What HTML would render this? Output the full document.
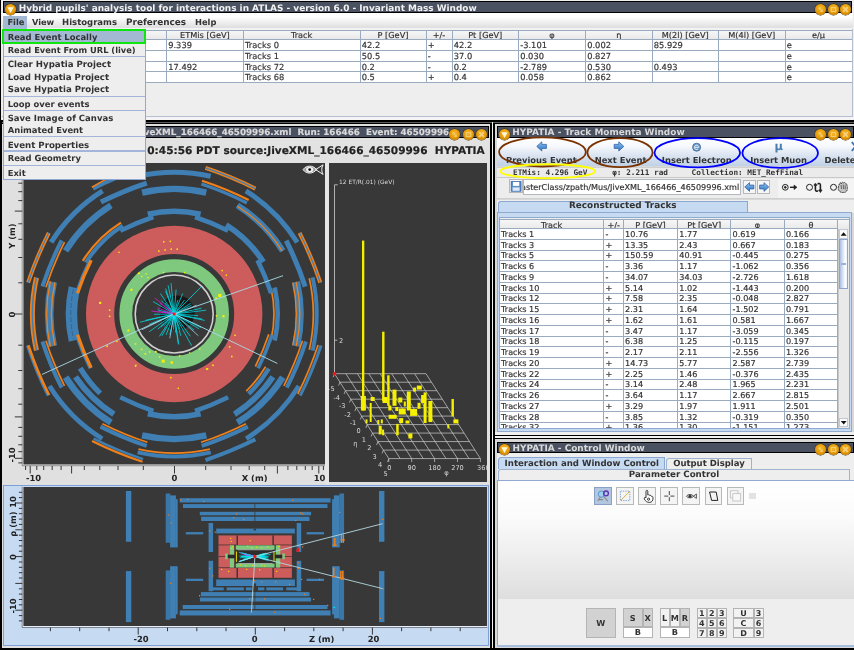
<!DOCTYPE html>
<html><head><meta charset="utf-8"><title>HYPATIA</title>
<style>
html,body{margin:0;padding:0;}
body{text-rendering:geometricPrecision;width:854px;height:650px;position:relative;overflow:hidden;background:#eeeeee;font-family:'DejaVu Sans','Liberation Sans',sans-serif;}
div{position:absolute;box-sizing:border-box;}
.t{margin:0;padding:0;-webkit-text-stroke:0.18px currentColor;}
svg{position:absolute;left:0;top:0;overflow:hidden;}
</style></head><body>
<div id="screen" style="left:0;top:0;width:854px;height:650px;will-change:transform;">
<!-- main window -->
<div style="left:0.00px;top:0.00px;width:1.30px;height:650.00px;background:#000;"></div>
<div style="left:0.00px;top:121.00px;width:1.90px;height:529.00px;background:#000;"></div>
<div style="left:2.00px;top:13.00px;width:850.80px;height:15.20px;background:linear-gradient(#ffffff,#ffffff 25%,#f2f2f2 55%,#dedede);"></div>
<div style="left:2.00px;top:28.20px;width:850.80px;height:1.80px;background:#f3f3f3;"></div>
<div style="left:2.90px;top:16.20px;width:23.80px;height:12.60px;background:#a3b8d2;"></div>
<div class="t" style="top:17px;font-size:8.3px;color:#333;white-space:pre;font-weight:bold;-webkit-text-stroke:0;left:7.40px;">File</div>
<div class="t" style="top:17px;font-size:8.25px;color:#333;white-space:pre;font-weight:bold;-webkit-text-stroke:0;left:31.90px;">View</div>
<div class="t" style="top:18px;font-size:8.5px;color:#333;white-space:pre;font-weight:bold;-webkit-text-stroke:0;left:62.10px;">Histograms</div>
<div class="t" style="top:18px;font-size:8.88px;color:#333;white-space:pre;font-weight:bold;-webkit-text-stroke:0;left:126.00px;">Preferences</div>
<div class="t" style="top:17px;font-size:8.3px;color:#333;white-space:pre;font-weight:bold;-webkit-text-stroke:0;left:195.00px;">Help</div>
<div style="left:3.00px;top:1.20px;width:848.80px;height:11.90px;background:#4a5161;border:1.2px solid #000;"></div><div class="t" style="top:4px;font-size:8.93px;color:#f2f2f2;white-space:pre;font-weight:bold;-webkit-text-stroke:0;left:18.70px;">Hybrid pupils' analysis tool for interactions in ATLAS - version 6.0 - Invariant Mass Window</div>
<div style="left:3.00px;top:30.00px;width:849.70px;height:9.40px;background:linear-gradient(#f6f6f6,#e9e9e9);border-top:1px solid #9aabc0;"></div>
<div style="left:3.00px;top:39.40px;width:849.70px;height:43.20px;background:#fff;"></div>
<div style="left:3.00px;top:38.90px;width:849.70px;height:1.00px;background:#9aabc0;"></div>
<div style="left:3.00px;top:50.00px;width:849.70px;height:1.00px;background:#9aabc0;"></div>
<div style="left:3.00px;top:60.70px;width:849.70px;height:1.00px;background:#9aabc0;"></div>
<div style="left:3.00px;top:71.40px;width:849.70px;height:1.00px;background:#9aabc0;"></div>
<div style="left:3.00px;top:82.10px;width:849.70px;height:1.00px;background:#9aabc0;"></div>
<div style="left:2.50px;top:30.00px;width:1.00px;height:53.00px;background:#9aabc0;"></div>
<div style="left:99.50px;top:30.00px;width:1.00px;height:53.00px;background:#9aabc0;"></div>
<div style="left:166.00px;top:30.00px;width:1.00px;height:53.00px;background:#9aabc0;"></div>
<div style="left:242.80px;top:30.00px;width:1.00px;height:53.00px;background:#9aabc0;"></div>
<div style="left:359.50px;top:30.00px;width:1.00px;height:53.00px;background:#9aabc0;"></div>
<div style="left:425.50px;top:30.00px;width:1.00px;height:53.00px;background:#9aabc0;"></div>
<div style="left:451.50px;top:30.00px;width:1.00px;height:53.00px;background:#9aabc0;"></div>
<div style="left:518.00px;top:30.00px;width:1.00px;height:53.00px;background:#9aabc0;"></div>
<div style="left:585.00px;top:30.00px;width:1.00px;height:53.00px;background:#9aabc0;"></div>
<div style="left:651.50px;top:30.00px;width:1.00px;height:53.00px;background:#9aabc0;"></div>
<div style="left:718.00px;top:30.00px;width:1.00px;height:53.00px;background:#9aabc0;"></div>
<div style="left:784.50px;top:30.00px;width:1.00px;height:53.00px;background:#9aabc0;"></div>
<div style="left:851.70px;top:30.00px;width:1.00px;height:53.00px;background:#9aabc0;"></div>
<div style="left:3.00px;top:30.00px;width:849.70px;height:9.40px;overflow:hidden;"><div class="t" style="top:0px;font-size:8.2px;color:#333;white-space:pre;left:1.90px;width:400px;text-align:center;">ETMis [GeV]</div><div class="t" style="top:0px;font-size:8.2px;color:#333;white-space:pre;left:98.65px;width:400px;text-align:center;">Track</div><div class="t" style="top:0px;font-size:8.2px;color:#333;white-space:pre;left:190.00px;width:400px;text-align:center;">P [GeV]</div><div class="t" style="top:0px;font-size:8.2px;color:#333;white-space:pre;left:236.00px;width:400px;text-align:center;">+/-</div><div class="t" style="top:0px;font-size:8.2px;color:#333;white-space:pre;left:282.25px;width:400px;text-align:center;">Pt [GeV]</div><div class="t" style="top:0px;font-size:8.2px;color:#333;white-space:pre;left:349.00px;width:400px;text-align:center;">φ</div><div class="t" style="top:0px;font-size:8.2px;color:#333;white-space:pre;left:415.75px;width:400px;text-align:center;">η</div><div class="t" style="top:0px;font-size:8.2px;color:#333;white-space:pre;left:482.25px;width:400px;text-align:center;">M(2l) [GeV]</div><div class="t" style="top:0px;font-size:8.2px;color:#333;white-space:pre;left:548.75px;width:400px;text-align:center;">M(4l) [GeV]</div><div class="t" style="top:0px;font-size:8.2px;color:#333;white-space:pre;left:615.60px;width:400px;text-align:center;">e/μ</div></div>
<div class="t" style="top:40px;font-size:8.3px;color:#333;white-space:pre;left:168.20px;">9.339</div>
<div class="t" style="top:40px;font-size:8.3px;color:#333;white-space:pre;left:245.00px;">Tracks 0</div>
<div class="t" style="top:40px;font-size:8.3px;color:#333;white-space:pre;left:361.70px;">42.2</div>
<div class="t" style="top:40px;font-size:8.3px;color:#333;white-space:pre;left:427.70px;">+</div>
<div class="t" style="top:40px;font-size:8.3px;color:#333;white-space:pre;left:453.70px;">42.2</div>
<div class="t" style="top:40px;font-size:8.3px;color:#333;white-space:pre;left:520.20px;">-3.101</div>
<div class="t" style="top:40px;font-size:8.3px;color:#333;white-space:pre;left:587.20px;">0.002</div>
<div class="t" style="top:40px;font-size:8.3px;color:#333;white-space:pre;left:653.70px;">85.929</div>
<div class="t" style="top:40px;font-size:8.3px;color:#333;white-space:pre;left:786.70px;">e</div>
<div class="t" style="top:51px;font-size:8.3px;color:#333;white-space:pre;left:245.00px;">Tracks 1</div>
<div class="t" style="top:51px;font-size:8.3px;color:#333;white-space:pre;left:361.70px;">50.5</div>
<div class="t" style="top:51px;font-size:8.3px;color:#333;white-space:pre;left:427.70px;">-</div>
<div class="t" style="top:51px;font-size:8.3px;color:#333;white-space:pre;left:453.70px;">37.0</div>
<div class="t" style="top:51px;font-size:8.3px;color:#333;white-space:pre;left:520.20px;">0.030</div>
<div class="t" style="top:51px;font-size:8.3px;color:#333;white-space:pre;left:587.20px;">0.827</div>
<div class="t" style="top:51px;font-size:8.3px;color:#333;white-space:pre;left:786.70px;">e</div>
<div class="t" style="top:62px;font-size:8.3px;color:#333;white-space:pre;left:168.20px;">17.492</div>
<div class="t" style="top:62px;font-size:8.3px;color:#333;white-space:pre;left:245.00px;">Tracks 72</div>
<div class="t" style="top:62px;font-size:8.3px;color:#333;white-space:pre;left:361.70px;">0.2</div>
<div class="t" style="top:62px;font-size:8.3px;color:#333;white-space:pre;left:427.70px;">-</div>
<div class="t" style="top:62px;font-size:8.3px;color:#333;white-space:pre;left:453.70px;">0.2</div>
<div class="t" style="top:62px;font-size:8.3px;color:#333;white-space:pre;left:520.20px;">-2.789</div>
<div class="t" style="top:62px;font-size:8.3px;color:#333;white-space:pre;left:587.20px;">0.530</div>
<div class="t" style="top:62px;font-size:8.3px;color:#333;white-space:pre;left:653.70px;">0.493</div>
<div class="t" style="top:62px;font-size:8.3px;color:#333;white-space:pre;left:786.70px;">e</div>
<div class="t" style="top:72px;font-size:8.3px;color:#333;white-space:pre;left:245.00px;">Tracks 68</div>
<div class="t" style="top:72px;font-size:8.3px;color:#333;white-space:pre;left:361.70px;">0.5</div>
<div class="t" style="top:72px;font-size:8.3px;color:#333;white-space:pre;left:427.70px;">+</div>
<div class="t" style="top:72px;font-size:8.3px;color:#333;white-space:pre;left:453.70px;">0.4</div>
<div class="t" style="top:72px;font-size:8.3px;color:#333;white-space:pre;left:520.20px;">0.058</div>
<div class="t" style="top:72px;font-size:8.3px;color:#333;white-space:pre;left:587.20px;">0.862</div>
<div class="t" style="top:72px;font-size:8.3px;color:#333;white-space:pre;left:786.70px;">e</div>
<div style="left:2.00px;top:115.90px;width:851.00px;height:1.40px;background:#b4c0d2;"></div>
<div style="left:852.00px;top:29.00px;width:1.10px;height:88.00px;background:#b4c0d2;"></div>
<div style="left:2.00px;top:117.30px;width:852.00px;height:2.40px;background:#f4f4f4;"></div>
<!-- desktop -->
<div style="left:0.00px;top:119.70px;width:854.00px;height:4.10px;background:#000;"></div>
<div style="left:2.00px;top:121.50px;width:852.00px;height:1.00px;background:#5c5c5c;"></div>
<div style="left:490.00px;top:122.60px;width:5.00px;height:527.40px;background:#000;"></div>
<div style="left:491.80px;top:121.60px;width:1.50px;height:528.40px;background:#f2f2ee;"></div>
<div style="left:0.00px;top:647.60px;width:854.00px;height:2.40px;background:#000;"></div>
<!-- canvas window -->
<div style="left:1.90px;top:123.80px;width:488.10px;height:523.80px;background:#e0e0e0;"></div>
<div style="left:4.30px;top:126.10px;width:484.40px;height:11.60px;background:#4a5161;border:1.2px solid #000;"></div>
<div style="left:4.3px;top:126.1px;width:444.9px;height:11.6px;overflow:hidden;"><div class="t" style="right:0;top:1px;font-size:8.75px;line-height:12px;font-weight:bold;color:#dadada;white-space:pre;">HYPATIA - Canvas: JiveXML_166466_46509996.xml  Run: 166466  Event: 46509996</div></div>



<div style="left:4.30px;top:137.70px;width:484.40px;height:25.40px;background:#e2e2e2;overflow:hidden;"><div class="t" style="right:4.0px;top:7.6px;font-size:10.55px;line-height:12px;font-weight:bold;color:#222;white-space:pre;">2010-10-21 0:45:56 PDT source:JiveXML_166466_46509996  HYPATIA</div></div>
<!-- XY view -->
<svg style="left:23.3px;top:163px" width="301.7" height="301.5" viewBox="23.3 163 301.7 301.5"><rect x="23" y="163" width="303" height="302" fill="#383838"/><path d="M275.0,340.6 A119.6,119.6 0 0 0 275.0,287.4" fill="none" stroke="#3f7fb3" stroke-width="4.6" /><path d="M271.4,339.6 A115.2,115.2 0 0 0 271.4,288.4" fill="none" stroke="#f0801a" stroke-width="1.7" /><path d="M296.4,346.2 A145.0,145.0 0 0 0 296.4,281.8" fill="none" stroke="#3f7fb3" stroke-width="8.2" /><path d="M293.1,345.3 A141.1,141.1 0 0 0 293.1,282.7" fill="none" stroke="#f0801a" stroke-width="1.3" /><path d="M296.5,346.2 A145.1,145.1 0 0 0 296.5,281.8" fill="none" stroke="#f0801a" stroke-width="1.3" /><path d="M312.9,350.6 A164.7,164.7 0 0 0 312.9,277.4" fill="none" stroke="#3f7fb3" stroke-width="4" /><path d="M309.6,349.7 A160.7,160.7 0 0 0 309.6,278.3" fill="none" stroke="#f0801a" stroke-width="1.7" /><path d="M263.7,262.1 A118.7,118.7 0 0 0 226.4,224.8" fill="none" stroke="#3f7fb3" stroke-width="5.6" /><path d="M283.1,250.8 A144.4,144.4 0 0 0 237.7,205.4" fill="none" stroke="#3f7fb3" stroke-width="6.2" /><path d="M282.6,251.1 A143.9,143.9 0 0 0 237.4,205.9" fill="none" stroke="#f0801a" stroke-width="1.2" /><path d="M297.6,242.4 A163.8,163.8 0 0 0 246.1,190.9" fill="none" stroke="#3f7fb3" stroke-width="5" /><path d="M200.9,214.2 A118.7,118.7 0 0 0 148.1,214.2" fill="none" stroke="#3f7fb3" stroke-width="5.6" /><path d="M206.6,192.6 A144.4,144.4 0 0 0 142.4,192.6" fill="none" stroke="#3f7fb3" stroke-width="6.2" /><path d="M210.9,176.3 A163.8,163.8 0 0 0 138.1,176.3" fill="none" stroke="#3f7fb3" stroke-width="5" /><path d="M123.1,225.7 A117.5,117.5 0 0 0 86.2,262.6" fill="none" stroke="#3f7fb3" stroke-width="3.9999999999999996" /><path d="M121.3,222.6 A121.7,121.7 0 0 0 83.1,260.8" fill="none" stroke="#f0801a" stroke-width="2.2" /><path d="M111.3,205.4 A144.4,144.4 0 0 0 65.9,250.8" fill="none" stroke="#3f7fb3" stroke-width="6.2" /><path d="M102.9,190.9 A163.8,163.8 0 0 0 51.4,242.4" fill="none" stroke="#3f7fb3" stroke-width="5" /><path d="M74.7,287.6 A118.7,118.7 0 0 0 74.7,340.4" fill="none" stroke="#3f7fb3" stroke-width="11.5" /><path d="M73.7,289.2 A119.4,119.4 0 0 0 73.7,338.8" fill="none" stroke="#2f5f8a" stroke-width="0.8" stroke-dasharray="5 2"/><path d="M53.1,281.9 A144.4,144.4 0 0 0 53.1,346.1" fill="none" stroke="#3f7fb3" stroke-width="8.6" /><path d="M55.2,282.5 A141.9,141.9 0 0 0 55.2,345.5" fill="none" stroke="#f0801a" stroke-width="1.3" /><path d="M50.7,281.3 A147.2,147.2 0 0 0 50.7,346.7" fill="none" stroke="#f0801a" stroke-width="1.3" /><path d="M36.8,277.6 A163.8,163.8 0 0 0 36.8,350.4" fill="none" stroke="#f0801a" stroke-width="5" /><path d="M36.8,277.6 A163.8,163.8 0 0 0 36.8,350.4" fill="none" stroke="#3f7fb3" stroke-width="1.5" /><path d="M80.5,368.2 A124.8,124.8 0 0 0 100.5,393.4" fill="none" stroke="#3f7fb3" stroke-width="5.5" /><path d="M75.8,376.9 A134.5,134.5 0 0 0 114.2,414.3" fill="none" stroke="#3f7fb3" stroke-width="6" /><path d="M65.9,377.2 A144.4,144.4 0 0 0 111.3,422.6" fill="none" stroke="#3f7fb3" stroke-width="6.5" /><path d="M49.8,386.0 A165.6,165.6 0 0 0 102.5,438.7" fill="none" stroke="#3f7fb3" stroke-width="4.8" /><path d="M148.1,413.8 A118.7,118.7 0 0 0 200.9,413.8" fill="none" stroke="#3f7fb3" stroke-width="5.6" /><path d="M142.4,435.4 A144.4,144.4 0 0 0 206.6,435.4" fill="none" stroke="#3f7fb3" stroke-width="6.2" /><path d="M137.9,452.4 A164.7,164.7 0 0 0 211.1,452.4" fill="none" stroke="#3f7fb3" stroke-width="4" /><path d="M138.8,449.1 A160.7,160.7 0 0 0 210.2,449.1" fill="none" stroke="#f0801a" stroke-width="1.7" /><path d="M249.0,393.9 A125.7,125.7 0 0 0 269.2,368.7" fill="none" stroke="#3f7fb3" stroke-width="4.5" /><path d="M246.5,391.2 A121.4,121.4 0 0 0 265.9,366.8" fill="none" stroke="#f0801a" stroke-width="1.7" /><path d="M234.8,414.3 A134.5,134.5 0 0 0 273.2,376.9" fill="none" stroke="#3f7fb3" stroke-width="6" /><path d="M237.7,422.6 A144.4,144.4 0 0 0 283.1,377.2" fill="none" stroke="#3f7fb3" stroke-width="6.5" /><path d="M246.5,438.7 A165.6,165.6 0 0 0 299.2,386.0" fill="none" stroke="#3f7fb3" stroke-width="4.8" /><path d="M271.5,293.2 A248.0,248.0 0 0 0 257.8,260.1" fill="none" stroke="#3f7fb3" stroke-width="4.6" /><path d="M305.5,286.6 A334.5,334.5 0 0 0 286.5,240.7" fill="none" stroke="#3f7fb3" stroke-width="5" /><path d="M320.6,282.7 A373.5,373.5 0 0 0 299.9,232.8" fill="none" stroke="#f0801a" stroke-width="4" /><path d="M320.6,282.7 A373.5,373.5 0 0 0 299.9,232.8" fill="none" stroke="#3f7fb3" stroke-width="1.2" /><path d="M228.4,230.7 A248.0,248.0 0 0 0 195.3,217.0" fill="none" stroke="#3f7fb3" stroke-width="4.6" /><path d="M247.2,202.9 A332.0,332.0 0 0 0 201.7,184.0" fill="none" stroke="#3f7fb3" stroke-width="3.4" /><path d="M249.0,200.1 A340.3,340.3 0 0 0 202.3,180.8" fill="none" stroke="#f0801a" stroke-width="2.2" /><path d="M255.7,188.6 A373.5,373.5 0 0 0 205.8,167.9" fill="none" stroke="#f0801a" stroke-width="4" /><path d="M255.7,188.6 A373.5,373.5 0 0 0 205.8,167.9" fill="none" stroke="#3f7fb3" stroke-width="1.2" /><path d="M153.7,217.0 A248.0,248.0 0 0 0 120.6,230.7" fill="none" stroke="#3f7fb3" stroke-width="4.6" /><path d="M147.1,183.0 A334.5,334.5 0 0 0 101.2,202.0" fill="none" stroke="#3f7fb3" stroke-width="5" /><path d="M143.2,167.9 A373.5,373.5 0 0 0 93.3,188.6" fill="none" stroke="#3f7fb3" stroke-width="4" /><path d="M90.8,259.8 A249.2,249.2 0 0 0 77.0,293.1" fill="none" stroke="#3f7fb3" stroke-width="3.9999999999999996" /><path d="M91.5,260.3 A247.2,247.2 0 0 0 77.8,293.3" fill="none" stroke="#f0801a" stroke-width="3.1999999999999997" /><path d="M61.9,240.3 A336.5,336.5 0 0 0 42.7,286.5" fill="none" stroke="#3f7fb3" stroke-width="4" /><path d="M64.8,242.2 A327.8,327.8 0 0 0 46.2,287.2" fill="none" stroke="#f0801a" stroke-width="1.7" /><path d="M49.1,232.8 A373.5,373.5 0 0 0 28.4,282.7" fill="none" stroke="#f0801a" stroke-width="4" /><path d="M49.1,232.8 A373.5,373.5 0 0 0 28.4,282.7" fill="none" stroke="#3f7fb3" stroke-width="1.2" /><path d="M77.0,334.9 A249.2,249.2 0 0 0 90.8,368.2" fill="none" stroke="#3f7fb3" stroke-width="3.9999999999999996" /><path d="M77.8,334.7 A247.2,247.2 0 0 0 91.5,367.7" fill="none" stroke="#f0801a" stroke-width="3.1999999999999997" /><path d="M42.7,341.5 A336.5,336.5 0 0 0 61.9,387.7" fill="none" stroke="#3f7fb3" stroke-width="4" /><path d="M46.2,340.8 A327.8,327.8 0 0 0 64.8,385.8" fill="none" stroke="#f0801a" stroke-width="1.7" /><path d="M27.9,345.4 A374.8,374.8 0 0 0 48.6,395.4" fill="none" stroke="#3f7fb3" stroke-width="3.4" /><path d="M28.7,345.3 A372.8,372.8 0 0 0 49.3,395.0" fill="none" stroke="#f0801a" stroke-width="2.6" /><path d="M120.6,397.3 A248.0,248.0 0 0 0 153.7,411.0" fill="none" stroke="#3f7fb3" stroke-width="4.6" /><path d="M100.8,426.6 A336.5,336.5 0 0 0 147.0,445.8" fill="none" stroke="#3f7fb3" stroke-width="4" /><path d="M102.7,423.7 A327.8,327.8 0 0 0 147.7,442.3" fill="none" stroke="#f0801a" stroke-width="1.7" /><path d="M93.9,438.6 A371.0,371.0 0 0 0 143.4,459.1" fill="none" stroke="#3f7fb3" stroke-width="2.4" /><path d="M92.4,441.0 A378.0,378.0 0 0 0 142.8,461.8" fill="none" stroke="#f0801a" stroke-width="2.2" /><path d="M195.3,411.0 A248.0,248.0 0 0 0 228.4,397.3" fill="none" stroke="#3f7fb3" stroke-width="4.6" /><path d="M202.0,445.8 A336.5,336.5 0 0 0 248.2,426.6" fill="none" stroke="#3f7fb3" stroke-width="4" /><path d="M201.3,442.3 A327.8,327.8 0 0 0 246.3,423.7" fill="none" stroke="#f0801a" stroke-width="1.7" /><path d="M205.8,460.1 A373.5,373.5 0 0 0 255.7,439.4" fill="none" stroke="#3f7fb3" stroke-width="4" /><path d="M258.5,368.3 A250.0,250.0 0 0 0 272.3,335.0" fill="none" stroke="#3f7fb3" stroke-width="3.5999999999999996" /><path d="M255.7,366.5 A241.8,241.8 0 0 0 269.1,334.3" fill="none" stroke="#f0801a" stroke-width="1.7" /><path d="M287.1,387.7 A336.5,336.5 0 0 0 306.3,341.5" fill="none" stroke="#3f7fb3" stroke-width="4" /><path d="M284.2,385.8 A327.8,327.8 0 0 0 302.8,340.8" fill="none" stroke="#f0801a" stroke-width="1.7" /><path d="M300.6,395.6 A375.5,375.5 0 0 0 321.4,345.5" fill="none" stroke="#3f7fb3" stroke-width="3" /><path d="M298.1,394.0 A368.0,368.0 0 0 0 318.4,344.9" fill="none" stroke="#f0801a" stroke-width="1.7" /><path d="M113.0,175.9 A378.0,378.0 0 0 0 92.2,187.2" fill="none" stroke="#f0801a" stroke-width="1.6" /><circle cx="174.5" cy="314.0" r="74.1" fill="none" stroke="#cd5c5c" stroke-width="28.2"/><circle cx="174.5" cy="314.0" r="48.4" fill="none" stroke="#7fc97f" stroke-width="12.8"/><circle cx="174.5" cy="314.0" r="39" fill="none" stroke="#d0d0d0" stroke-width="1.6"/><circle cx="177.5" cy="313.0" r="17.5" fill="#161616"/><rect x="138.1" y="272.6" width="1.6" height="1.6" fill="#f5f000"/><rect x="141.4" y="275.8" width="1.4" height="1.4" fill="#f5f000"/><rect x="145.6" y="273.1" width="1.4" height="1.4" fill="#f5f000"/><rect x="147.5" y="276.9" width="1.4" height="1.4" fill="#f5f000"/><rect x="130.6" y="289.1" width="1.8" height="1.8" fill="#f5f000"/><rect x="218.5" y="293.9" width="3.2" height="3.2" fill="#f5f000"/><rect x="215.6" y="297.4" width="1.8" height="1.8" fill="#f5f000"/><rect x="222.7" y="315.1" width="2.2" height="2.2" fill="#f5f000"/><rect x="162.0" y="359.6" width="3" height="3" fill="#f5f000"/><rect x="170.9" y="361.3" width="2.4" height="2.4" fill="#f5f000"/><rect x="155.2" y="350.9" width="1.8" height="1.8" fill="#f5f000"/><rect x="135.5" y="364.6" width="1.4" height="1.4" fill="#f5f000"/><rect x="128.0" y="329.4" width="1.6" height="1.6" fill="#f5f000"/><rect x="221.8" y="269.9" width="1.4" height="1.4" fill="#f5f000"/><rect x="225.9" y="274.5" width="1.4" height="1.4" fill="#f5f000"/><rect x="229.1" y="346.1" width="1.6" height="1.6" fill="#f5f000"/><rect x="231.3" y="355.7" width="1.6" height="1.6" fill="#f5f000"/><rect x="207.0" y="368.0" width="1.6" height="1.6" fill="#f5f000"/><rect x="212.5" y="364.5" width="1.6" height="1.6" fill="#f5f000"/><rect x="184.3" y="271.8" width="1.4" height="1.4" fill="#f5f000"/><rect x="163.1" y="271.8" width="1.4" height="1.4" fill="#f5f000"/><rect x="163.3" y="241.1" width="1.5" height="1.5" fill="#f5f000"/><rect x="169.9" y="240.6" width="1.5" height="1.5" fill="#f5f000"/><rect x="158.4" y="250.3" width="1.5" height="1.5" fill="#f5f000"/><rect x="164.6" y="249.2" width="1.5" height="1.5" fill="#f5f000"/><rect x="170.8" y="248.4" width="1.5" height="1.5" fill="#f5f000"/><rect x="176.8" y="248.4" width="1.5" height="1.5" fill="#f5f000"/><rect x="118.6" y="251.7" width="1.4" height="1.4" fill="#f5f000"/><rect x="99.4" y="301.8" width="2.2" height="2.2" fill="#f5f000"/><rect x="109.2" y="309.4" width="1.5" height="1.5" fill="#f5f000"/><rect x="109.2" y="315.6" width="1.5" height="1.5" fill="#f5f000"/><rect x="138.8" y="272.6" width="1.5" height="1.5" fill="#f5f000"/><rect x="131.3" y="288.6" width="1.5" height="1.5" fill="#f5f000"/><rect x="234.6" y="334.6" width="1.5" height="1.5" fill="#f5f000"/><rect x="206.2" y="368.4" width="1.5" height="1.5" fill="#f5f000"/><rect x="177.9" y="387.6" width="1.4" height="1.4" fill="#f5f000"/><rect x="170.4" y="376.9" width="1.5" height="1.5" fill="#f5f000"/><rect x="106.6" y="345.4" width="1.6" height="1.6" fill="#f5f000"/><rect x="116.5" y="340.6" width="1.5" height="1.5" fill="#f5f000"/><rect x="127.7" y="330.1" width="1.5" height="1.5" fill="#f5f000"/><rect x="135.1" y="343.2" width="1.5" height="1.5" fill="#f5f000"/><rect x="141.1" y="348.6" width="1.6" height="1.6" fill="#f5f000"/><rect x="144.8" y="353.0" width="1.6" height="1.6" fill="#f5f000"/><rect x="135.1" y="365.5" width="1.4" height="1.4" fill="#f5f000"/><rect x="216.0" y="314.9" width="1.6" height="1.6" fill="#f5f000"/><rect x="149.2" y="351.2" width="1.5" height="1.5" fill="#f5f000"/><rect x="159.2" y="356.2" width="1.5" height="1.5" fill="#f5f000"/><rect x="179.2" y="355.2" width="1.5" height="1.5" fill="#f5f000"/><rect x="189.3" y="352.3" width="1.4" height="1.4" fill="#f5f000"/><rect x="199.3" y="348.3" width="1.4" height="1.4" fill="#f5f000"/><rect x="213.3" y="329.3" width="1.4" height="1.4" fill="#f5f000"/><path d="M174.5,314.0 L171.3,283.0" stroke="#00e0e8" stroke-width="0.75" fill="none"/><path d="M174.5,314.0 L168.4,285.3" stroke="#00e0e8" stroke-width="0.75" fill="none"/><path d="M174.5,314.0 L165.9,288.5" stroke="#00e0e8" stroke-width="0.75" fill="none"/><path d="M174.5,314.0 L165.9,291.1" stroke="#00e0e8" stroke-width="0.75" fill="none"/><path d="M174.5,314.0 L160.6,293.4" stroke="#00e0e8" stroke-width="0.75" fill="none"/><path d="M174.5,314.0 L165.1,302.7" stroke="#00e0e8" stroke-width="0.75" fill="none"/><path d="M174.5,314.0 L161.6,300.5" stroke="#00e0e8" stroke-width="0.75" fill="none"/><path d="M174.5,314.0 L154.9,297.8" stroke="#e020e0" stroke-width="0.75" fill="none"/><path d="M174.5,314.0 L160.6,303.4" stroke="#e020e0" stroke-width="0.75" fill="none"/><path d="M174.5,314.0 L153.3,301.5" stroke="#00e0e8" stroke-width="0.75" fill="none"/><path d="M174.5,314.0 L157.7,307.8" stroke="#e020e0" stroke-width="0.75" fill="none"/><path d="M174.5,314.0 L158.0,309.9" stroke="#00e0e8" stroke-width="0.75" fill="none"/><path d="M174.5,314.0 L159.1,311.5" stroke="#e020e0" stroke-width="0.75" fill="none"/><path d="M174.5,314.0 L151.7,311.0" stroke="#e020e0" stroke-width="0.75" fill="none"/><path d="M174.5,314.0 L154.3,314.3" stroke="#00e0e8" stroke-width="0.75" fill="none"/><path d="M174.5,314.0 L145.9,320.3" stroke="#00e0e8" stroke-width="0.75" fill="none"/><path d="M174.5,314.0 L140.3,322.2" stroke="#00e0e8" stroke-width="0.75" fill="none"/><path d="M174.5,314.0 L149.4,324.3" stroke="#00e0e8" stroke-width="0.75" fill="none"/><path d="M174.5,314.0 L142.3,329.7" stroke="#9fd8f0" stroke-width="0.75" fill="none"/><path d="M174.5,314.0 L149.4,331.8" stroke="#00e0e8" stroke-width="0.75" fill="none"/><path d="M174.5,314.0 L158.1,329.2" stroke="#00e0e8" stroke-width="0.75" fill="none"/><path d="M174.5,314.0 L161.3,327.2" stroke="#00e0e8" stroke-width="0.75" fill="none"/><path d="M174.5,314.0 L164.6,325.6" stroke="#00e0e8" stroke-width="0.75" fill="none"/><path d="M174.5,314.0 L159.7,336.4" stroke="#00e0e8" stroke-width="0.75" fill="none"/><path d="M174.5,314.0 L162.1,336.0" stroke="#00e0e8" stroke-width="0.75" fill="none"/><path d="M174.5,314.0 L166.4,335.0" stroke="#00e0e8" stroke-width="0.75" fill="none"/><path d="M174.5,314.0 L170.1,335.0" stroke="#00e0e8" stroke-width="0.75" fill="none"/><path d="M174.5,314.0 L170.1,338.3" stroke="#9fd8f0" stroke-width="0.75" fill="none"/><path d="M174.5,314.0 L173.8,329.7" stroke="#00e0e8" stroke-width="0.75" fill="none"/><path d="M174.5,314.0 L175.9,332.5" stroke="#00e0e8" stroke-width="0.75" fill="none"/><path d="M174.5,314.0 L178.5,343.6" stroke="#00e0e8" stroke-width="0.75" fill="none"/><path d="M174.5,314.0 L179.1,344.6" stroke="#00e0e8" stroke-width="0.75" fill="none"/><path d="M174.5,314.0 L181.2,335.9" stroke="#00e0e8" stroke-width="0.75" fill="none"/><path d="M174.5,314.0 L180.6,330.2" stroke="#00e0e8" stroke-width="0.75" fill="none"/><path d="M174.5,314.0 L191.9,345.7" stroke="#00e0e8" stroke-width="0.75" fill="none"/><path d="M174.5,314.0 L190.6,336.3" stroke="#00e0e8" stroke-width="0.75" fill="none"/><path d="M174.5,314.0 L198.7,335.8" stroke="#9fd8f0" stroke-width="0.75" fill="none"/><path d="M174.5,314.0 L194.4,330.1" stroke="#00e0e8" stroke-width="0.75" fill="none"/><path d="M174.5,314.0 L199.2,328.7" stroke="#00e0e8" stroke-width="0.75" fill="none"/><path d="M174.5,314.0 L201.5,327.6" stroke="#00e0e8" stroke-width="0.75" fill="none"/><path d="M174.5,314.0 L205.0,320.4" stroke="#00e0e8" stroke-width="0.75" fill="none"/><path d="M174.5,314.0 L202.4,319.0" stroke="#00e0e8" stroke-width="0.75" fill="none"/><path d="M174.5,314.0 L198.3,315.6" stroke="#00e0e8" stroke-width="0.75" fill="none"/><path d="M174.5,314.0 L206.5,310.2" stroke="#00e0e8" stroke-width="0.75" fill="none"/><path d="M174.5,314.0 L201.9,308.2" stroke="#00e0e8" stroke-width="0.75" fill="none"/><path d="M174.5,314.0 L196.9,305.3" stroke="#9fd8f0" stroke-width="0.75" fill="none"/><path d="M174.5,314.0 L191.9,305.2" stroke="#00e0e8" stroke-width="0.75" fill="none"/><path d="M174.5,314.0 L191.0,303.3" stroke="#00e0e8" stroke-width="0.75" fill="none"/><path d="M174.5,314.0 L201.2,287.0" stroke="#00e0e8" stroke-width="0.75" fill="none"/><path d="M174.5,314.0 L184.8,300.0" stroke="#00e0e8" stroke-width="0.75" fill="none"/><path d="M174.5,314.0 L183.0,293.5" stroke="#00e0e8" stroke-width="0.75" fill="none"/><path d="M174.5,314.0 L178.1,300.1" stroke="#00e0e8" stroke-width="0.75" fill="none"/><path d="M174.5,314.0 L176.4,289.6" stroke="#00e0e8" stroke-width="0.75" fill="none"/><path d="M174.5,314.0 L283.3,275.7" stroke="#a8dce8" stroke-width="0.9" fill="none"/><path d="M174.5,314.0 L277.6,363.4" stroke="#a8dce8" stroke-width="0.9" fill="none"/><path d="M174.5,314.0 L42.2,374.5" stroke="#a8dce8" stroke-width="0.9" fill="none"/><rect x="173.1" y="312.6" width="2.8" height="2.8" fill="#ff1010"/><g transform="translate(303.4,169.6)" fill="none" stroke="#f4f4f4" stroke-width="1"><path d="M0,0 C3,-4.6 10,-4.6 13.5,0 C10,4.6 3,4.6 0,0 Z" fill="#9a9a9a"/><path d="M12.5,0 L20,-4.8 C18.2,-2 18.2,2 20,4.8 Z"/><ellipse cx="6.6" cy="0" rx="3.6" ry="2.7" fill="#f4f4f4" stroke="none"/><circle cx="6.6" cy="0" r="1.4" fill="#111" stroke="none"/></g></svg>
<!-- XY axes -->
<svg width="330" height="486" viewBox="0 0 330 486" font-family="DejaVu Sans, Liberation Sans, sans-serif"><path d="M22.9,163 L22.9,465 L326,465" stroke="#f4f4f4" stroke-width="1" fill="none"/><path d="M22.2,163 L22.2,465.7 L326,465.7" stroke="#555" stroke-width="0.6" fill="none"/><path d="M174.5,466 L174.5,473.5" stroke="#222" stroke-width="0.9"/><path d="M205.7,466 L205.7,470" stroke="#222" stroke-width="0.9"/><path d="M143.3,466 L143.3,470" stroke="#222" stroke-width="0.9"/><path d="M231.0,466 L231.0,470" stroke="#222" stroke-width="0.9"/><path d="M118.0,466 L118.0,470" stroke="#222" stroke-width="0.9"/><path d="M249.2,466 L249.2,470" stroke="#222" stroke-width="0.9"/><path d="M99.8,466 L99.8,470" stroke="#222" stroke-width="0.9"/><path d="M264.7,466 L264.7,470" stroke="#222" stroke-width="0.9"/><path d="M84.3,466 L84.3,470" stroke="#222" stroke-width="0.9"/><path d="M277.4,466 L277.4,473.5" stroke="#222" stroke-width="0.9"/><path d="M71.6,466 L71.6,473.5" stroke="#222" stroke-width="0.9"/><path d="M287.9,466 L287.9,470" stroke="#222" stroke-width="0.9"/><path d="M61.1,466 L61.1,470" stroke="#222" stroke-width="0.9"/><path d="M296.8,466 L296.8,470" stroke="#222" stroke-width="0.9"/><path d="M52.2,466 L52.2,470" stroke="#222" stroke-width="0.9"/><path d="M305.3,466 L305.3,470" stroke="#222" stroke-width="0.9"/><path d="M43.7,466 L43.7,470" stroke="#222" stroke-width="0.9"/><path d="M312.2,466 L312.2,470" stroke="#222" stroke-width="0.9"/><path d="M36.8,466 L36.8,470" stroke="#222" stroke-width="0.9"/><path d="M318.8,466 L318.8,473.5" stroke="#222" stroke-width="0.9"/><path d="M30.2,466 L30.2,473.5" stroke="#222" stroke-width="0.9"/><path d="M323.4,466 L323.4,470" stroke="#222" stroke-width="0.9"/><path d="M25.6,466 L25.6,470" stroke="#222" stroke-width="0.9"/><path d="M14.8,314.0 L22.3,314.0" stroke="#222" stroke-width="0.9"/><path d="M18.3,345.2 L22.3,345.2" stroke="#222" stroke-width="0.9"/><path d="M18.3,282.8 L22.3,282.8" stroke="#222" stroke-width="0.9"/><path d="M18.3,370.5 L22.3,370.5" stroke="#222" stroke-width="0.9"/><path d="M18.3,257.5 L22.3,257.5" stroke="#222" stroke-width="0.9"/><path d="M18.3,388.7 L22.3,388.7" stroke="#222" stroke-width="0.9"/><path d="M18.3,239.3 L22.3,239.3" stroke="#222" stroke-width="0.9"/><path d="M18.3,404.2 L22.3,404.2" stroke="#222" stroke-width="0.9"/><path d="M18.3,223.8 L22.3,223.8" stroke="#222" stroke-width="0.9"/><path d="M14.8,416.9 L22.3,416.9" stroke="#222" stroke-width="0.9"/><path d="M14.8,211.1 L22.3,211.1" stroke="#222" stroke-width="0.9"/><path d="M18.3,427.4 L22.3,427.4" stroke="#222" stroke-width="0.9"/><path d="M18.3,200.6 L22.3,200.6" stroke="#222" stroke-width="0.9"/><path d="M18.3,436.3 L22.3,436.3" stroke="#222" stroke-width="0.9"/><path d="M18.3,191.7 L22.3,191.7" stroke="#222" stroke-width="0.9"/><path d="M18.3,444.8 L22.3,444.8" stroke="#222" stroke-width="0.9"/><path d="M18.3,183.2 L22.3,183.2" stroke="#222" stroke-width="0.9"/><path d="M18.3,451.7 L22.3,451.7" stroke="#222" stroke-width="0.9"/><path d="M18.3,176.3 L22.3,176.3" stroke="#222" stroke-width="0.9"/><path d="M14.8,458.3 L22.3,458.3" stroke="#222" stroke-width="0.9"/><path d="M14.8,169.7 L22.3,169.7" stroke="#222" stroke-width="0.9"/><path d="M18.3,462.9 L22.3,462.9" stroke="#222" stroke-width="0.9"/><path d="M18.3,165.1 L22.3,165.1" stroke="#222" stroke-width="0.9"/><text x="33.5" y="480.8" font-size="8.4" text-anchor="middle" fill="#222" font-weight="bold">-10</text><text x="174.4" y="480.8" font-size="8.4" text-anchor="middle" fill="#222" font-weight="bold">0</text><text x="254.6" y="480.8" font-size="8.4" text-anchor="middle" fill="#222" font-weight="bold">X (m)</text><text x="319.6" y="480.8" font-size="8.4" text-anchor="middle" fill="#222" font-weight="bold">10</text><text x="15.2" y="314.7" font-size="8.4" text-anchor="middle" fill="#222" font-weight="bold" transform="rotate(-90 15.2 314.7)">0</text><text x="15.2" y="236" font-size="8.4" text-anchor="middle" fill="#222" font-weight="bold" transform="rotate(-90 15.2 236)">Y (m)</text><text x="15.2" y="455" font-size="8.4" text-anchor="middle" fill="#222" font-weight="bold" transform="rotate(-90 15.2 455)">-10</text><text x="15.2" y="172" font-size="8.4" text-anchor="middle" fill="#222" font-weight="bold" transform="rotate(-90 15.2 172)">10</text></svg>
<div style="left:325.00px;top:163.00px;width:4.20px;height:322.00px;background:#e6e6e6;"></div>
<!-- lego -->
<svg style="left:329.2px;top:163px" width="158" height="319.4" viewBox="329.2 163 158 319.4" font-family="DejaVu Sans, Liberation Sans, sans-serif"><rect x="329" y="163" width="159" height="320" fill="#383838"/><path d="M334.7,373.7 L426.2,373.7" stroke="#cfcfcf" stroke-width="0.7"/><path d="M334.7,373.7 L333.4,377.1" stroke="#cfcfcf" stroke-width="0.7"/><path d="M340.1,382.2 L431.6,382.2" stroke="#cfcfcf" stroke-width="0.7"/><path d="M340.1,382.2 L338.8,385.6" stroke="#cfcfcf" stroke-width="0.7"/><path d="M345.6,390.7 L437.1,390.7" stroke="#cfcfcf" stroke-width="0.7"/><path d="M345.6,390.7 L344.3,394.1" stroke="#cfcfcf" stroke-width="0.7"/><path d="M351.0,399.2 L442.5,399.2" stroke="#cfcfcf" stroke-width="0.7"/><path d="M351.0,399.2 L349.7,402.6" stroke="#cfcfcf" stroke-width="0.7"/><path d="M356.4,407.7 L448.0,407.7" stroke="#cfcfcf" stroke-width="0.7"/><path d="M356.4,407.7 L355.1,411.1" stroke="#cfcfcf" stroke-width="0.7"/><path d="M361.9,416.1 L453.4,416.1" stroke="#cfcfcf" stroke-width="0.7"/><path d="M361.9,416.1 L360.6,419.5" stroke="#cfcfcf" stroke-width="0.7"/><path d="M367.3,424.6 L458.8,424.6" stroke="#cfcfcf" stroke-width="0.7"/><path d="M367.3,424.6 L366.0,428.0" stroke="#cfcfcf" stroke-width="0.7"/><path d="M372.7,433.1 L464.3,433.1" stroke="#cfcfcf" stroke-width="0.7"/><path d="M372.7,433.1 L371.4,436.5" stroke="#cfcfcf" stroke-width="0.7"/><path d="M378.1,441.6 L469.7,441.6" stroke="#cfcfcf" stroke-width="0.7"/><path d="M378.1,441.6 L376.8,445.0" stroke="#cfcfcf" stroke-width="0.7"/><path d="M383.6,450.1 L475.2,450.1" stroke="#cfcfcf" stroke-width="0.7"/><path d="M383.6,450.1 L382.3,453.5" stroke="#cfcfcf" stroke-width="0.7"/><path d="M389.0,458.6 L480.6,458.6" stroke="#cfcfcf" stroke-width="0.7"/><path d="M389.0,458.6 L387.7,462.0" stroke="#cfcfcf" stroke-width="0.7"/><path d="M334.7,373.7 L389.0,458.6" stroke="#cfcfcf" stroke-width="0.7"/><path d="M389.0,458.6 L389.0,462.1" stroke="#cfcfcf" stroke-width="0.7"/><path d="M346.1,373.7 L400.4,458.6" stroke="#cfcfcf" stroke-width="0.7"/><path d="M357.6,373.7 L411.9,458.6" stroke="#cfcfcf" stroke-width="0.7"/><path d="M411.9,458.6 L411.9,462.1" stroke="#cfcfcf" stroke-width="0.7"/><path d="M369.0,373.7 L423.4,458.6" stroke="#cfcfcf" stroke-width="0.7"/><path d="M380.4,373.7 L434.8,458.6" stroke="#cfcfcf" stroke-width="0.7"/><path d="M434.8,458.6 L434.8,462.1" stroke="#cfcfcf" stroke-width="0.7"/><path d="M391.9,373.7 L446.2,458.6" stroke="#cfcfcf" stroke-width="0.7"/><path d="M403.3,373.7 L457.7,458.6" stroke="#cfcfcf" stroke-width="0.7"/><path d="M457.7,458.6 L457.7,462.1" stroke="#cfcfcf" stroke-width="0.7"/><path d="M414.8,373.7 L469.2,458.6" stroke="#cfcfcf" stroke-width="0.7"/><path d="M426.2,373.7 L480.6,458.6" stroke="#cfcfcf" stroke-width="0.7"/><path d="M480.6,458.6 L480.6,462.1" stroke="#cfcfcf" stroke-width="0.7"/><path d="M334.7,373.7 L334.7,184.8 L338,184.8" stroke="#cfcfcf" stroke-width="0.8" fill="none"/><path d="M334.7,340.2 L337.6,340.2" stroke="#cfcfcf" stroke-width="0.8"/><text x="339.3" y="184.2" font-size="5.9" text-anchor="start" fill="#d8d8d8">12 ET/R(.01) (GeV)</text><text x="339.3" y="342.6" font-size="6.6" text-anchor="start" fill="#d8d8d8">2</text><text x="331.5" y="391.1" font-size="6.6" text-anchor="middle" fill="#d8d8d8">-5</text><text x="336.9" y="399.6" font-size="6.6" text-anchor="middle" fill="#d8d8d8">-4</text><text x="342.4" y="408.1" font-size="6.6" text-anchor="middle" fill="#d8d8d8">-3</text><text x="347.8" y="416.6" font-size="6.6" text-anchor="middle" fill="#d8d8d8">-2</text><text x="353.2" y="425.1" font-size="6.6" text-anchor="middle" fill="#d8d8d8">-1</text><text x="358.7" y="433.5" font-size="6.6" text-anchor="middle" fill="#d8d8d8">0</text><text x="364.1" y="442.0" font-size="6.6" text-anchor="middle" fill="#d8d8d8">1</text><text x="369.5" y="450.5" font-size="6.6" text-anchor="middle" fill="#d8d8d8">2</text><text x="374.9" y="459.0" font-size="6.6" text-anchor="middle" fill="#d8d8d8">3</text><text x="380.4" y="467.5" font-size="6.6" text-anchor="middle" fill="#d8d8d8">4</text><text x="385.8" y="476.0" font-size="6.6" text-anchor="middle" fill="#d8d8d8">5</text><text x="355.6" y="445.6" font-size="6.8" text-anchor="middle" fill="#d8d8d8">η</text><text x="389.5" y="470.4" font-size="6.6" text-anchor="middle" fill="#d8d8d8">0</text><text x="411.9" y="470.4" font-size="6.6" text-anchor="middle" fill="#d8d8d8">90</text><text x="434.8" y="470.4" font-size="6.6" text-anchor="middle" fill="#d8d8d8">180</text><text x="457.7" y="470.4" font-size="6.6" text-anchor="middle" fill="#d8d8d8">270</text><text x="477.3" y="470.4" font-size="6.6" text-anchor="start" fill="#d8d8d8">360</text><text x="446.8" y="475.2" font-size="6.8" text-anchor="middle" fill="#d8d8d8">φ</text><rect x="362.2" y="240.6" width="2.3" height="169.9" fill="#f4f000"/><rect x="361.1" y="396.0" width="5.0" height="14.5" fill="#f4f000"/><rect x="382.3" y="331.7" width="2.4" height="69.3" fill="#f4f000"/><rect x="387.4" y="375.3" width="2.4" height="30.5" fill="#f4f000"/><rect x="392.7" y="389.6" width="4" height="16.2" fill="#f4f000"/><rect x="407.0" y="391.5" width="4" height="19.0" fill="#f4f000"/><rect x="423.8" y="392.4" width="3" height="30.6" fill="#f4f000"/><rect x="428.6" y="401.0" width="4" height="21.0" fill="#f4f000"/><rect x="451.7" y="399.0" width="2.4" height="17.3" fill="#f4f000"/><rect x="369.9" y="403.0" width="2" height="19.0" fill="#f4f000"/><rect x="396.4" y="423.9" width="2.5" height="11.4" fill="#f4f000"/><rect x="378.9" y="425.8" width="3" height="8.6" fill="#f4f000"/><rect x="382.3" y="429.6" width="2" height="5.7" fill="#f4f000"/><rect x="370.8" y="397.0" width="4" height="4" fill="#f4f000"/><rect x="417.0" y="385.6" width="5" height="4" fill="#f4f000"/><rect x="413.3" y="387.6" width="3" height="4" fill="#f4f000"/><rect x="398.5" y="397.5" width="4" height="5" fill="#f4f000"/><rect x="398.9" y="408.5" width="7" height="6" fill="#f4f000"/><rect x="410.3" y="408.9" width="7" height="7" fill="#f4f000"/><rect x="388.8" y="414.8" width="8" height="4" fill="#f4f000"/><rect x="399.4" y="418.1" width="4" height="5" fill="#f4f000"/><rect x="405.7" y="420.5" width="4" height="3" fill="#f4f000"/><rect x="408.6" y="433.4" width="4" height="5" fill="#f4f000"/><rect x="453.6" y="419.4" width="5" height="4" fill="#f4f000"/><rect x="447.5" y="424.4" width="2" height="4" fill="#f4f000"/><rect x="365.7" y="419.4" width="2" height="4" fill="#f4f000"/><rect x="377.5" y="420.0" width="2" height="4" fill="#f4f000"/><rect x="381.0" y="419.4" width="2" height="4" fill="#f4f000"/><rect x="417.7" y="402.8" width="3" height="6" fill="#f4f000"/><rect x="382.7" y="397.0" width="5" height="6" fill="#f4f000"/><rect x="421.3" y="395.0" width="4" height="8" fill="#f4f000"/><rect x="388.5" y="405.5" width="3" height="5" fill="#f4f000"/><rect x="395.5" y="407.0" width="3" height="4" fill="#f4f000"/><rect x="404.0" y="401.5" width="2" height="5" fill="#f4f000"/><circle cx="334.7" cy="373.7" r="1.8" fill="#ff1010"/></svg>
<!-- rhoZ -->
<div style="left:3.20px;top:485.20px;width:485.60px;height:161.20px;background:#c6daf2;border:1px solid #7d9fd6;"></div>
<svg style="left:23.3px;top:486.6px" width="463.9" height="139.6" viewBox="23.3 486.6 463.9 139.6"><rect x="22" y="486" width="467" height="141" fill="#383838"/><rect x="126.2" y="490.6" width="5.4" height="50.8" fill="#3f7fb3"/><rect x="126.2" y="570.7" width="5.4" height="51.0" fill="#3f7fb3"/><rect x="379.3" y="490.6" width="5.4" height="50.8" fill="#3f7fb3"/><rect x="379.3" y="570.7" width="5.4" height="51.0" fill="#3f7fb3"/><rect x="166.0" y="493.1" width="4.6" height="49.2" fill="#3a76a8"/><rect x="339.8" y="493.1" width="4.6" height="49.2" fill="#3a76a8"/><rect x="170.4" y="495.0" width="5.8" height="52.0" fill="#3f7fb3"/><rect x="334.2" y="495.0" width="5.8" height="52.0" fill="#3f7fb3"/><rect x="176.0" y="498.8" width="2.0" height="48.2" fill="#3f7fb3"/><rect x="332.4" y="498.8" width="2.0" height="48.2" fill="#3f7fb3"/><rect x="166.0" y="570.0" width="4.6" height="49.4" fill="#3a76a8"/><rect x="339.8" y="570.0" width="4.6" height="49.4" fill="#3a76a8"/><rect x="170.4" y="565.8" width="5.8" height="52.2" fill="#3f7fb3"/><rect x="334.2" y="565.8" width="5.8" height="52.2" fill="#3f7fb3"/><rect x="176.0" y="565.8" width="2.0" height="48.2" fill="#3f7fb3"/><rect x="332.4" y="565.8" width="2.0" height="48.2" fill="#3f7fb3"/><rect x="180.0" y="497.8" width="150.9" height="4.3" fill="#3f7fb3"/><rect x="183.3" y="503.7" width="144.5" height="3.9" fill="#3f7fb3"/><rect x="200.1" y="511.4" width="111.3" height="3.5" fill="#3f7fb3"/><rect x="201.4" y="516.3" width="108.4" height="4.3" fill="#3f7fb3"/><rect x="201.2" y="591.7" width="108.6" height="4.2" fill="#3f7fb3"/><rect x="200.2" y="597.1" width="111.2" height="4.0" fill="#3f7fb3"/><rect x="183.0" y="604.6" width="144.8" height="4.0" fill="#3f7fb3"/><rect x="180.0" y="610.0" width="150.9" height="5.1" fill="#3f7fb3"/><rect x="254.8" y="503.7" width="0.8" height="3.9" fill="#383838"/><rect x="254.8" y="511.4" width="0.8" height="9.2" fill="#383838"/><rect x="254.8" y="591.7" width="0.8" height="9.4" fill="#383838"/><rect x="254.8" y="604.6" width="0.8" height="4.0" fill="#383838"/><rect x="186.1" y="531.7" width="17.4" height="2.3" fill="#3f7fb3"/><rect x="306.9" y="531.7" width="17.4" height="2.3" fill="#3f7fb3"/><rect x="186.1" y="578.3" width="17.4" height="2.3" fill="#3f7fb3"/><rect x="306.9" y="578.3" width="17.4" height="2.3" fill="#3f7fb3"/><rect x="208.9" y="522.6" width="4.5" height="29.0" fill="#3f7fb3"/><rect x="297.0" y="522.6" width="4.5" height="29.0" fill="#3f7fb3"/><rect x="208.9" y="560.4" width="4.5" height="30.4" fill="#3f7fb3"/><rect x="297.0" y="560.4" width="4.5" height="30.4" fill="#3f7fb3"/><rect x="216.5" y="528.2" width="78.7" height="4.8" fill="#3f7fb3"/><rect x="254.0" y="528.2" width="2.4" height="1.8" fill="#383838"/><rect x="216.5" y="579.1" width="78.7" height="6.5" fill="#3f7fb3"/><rect x="254.0" y="583.0" width="2.4" height="7.0" fill="#383838"/><rect x="212.6" y="587.0" width="11.4" height="2.9" fill="#3f7fb3"/><rect x="226.9" y="587.0" width="17.3" height="2.9" fill="#3f7fb3"/><rect x="246.2" y="587.0" width="5.8" height="2.9" fill="#3f7fb3"/><rect x="258.3" y="587.0" width="6.4" height="2.9" fill="#3f7fb3"/><rect x="266.5" y="587.0" width="16.9" height="2.9" fill="#3f7fb3"/><rect x="286.6" y="587.0" width="11.4" height="2.9" fill="#3f7fb3"/><rect x="218.8" y="535.0" width="73.4" height="42.4" fill="#cd5c5c"/><rect x="236.9" y="535.0" width="1.2" height="42.4" fill="#2a2a2a"/><rect x="272.8" y="535.0" width="1.2" height="42.4" fill="#2a2a2a"/><rect x="218.8" y="544.2" width="18.2" height="0.7" fill="#3a3030"/><rect x="274.0" y="544.2" width="18.2" height="0.7" fill="#3a3030"/><rect x="218.8" y="555.9" width="18.2" height="0.7" fill="#3a3030"/><rect x="274.0" y="555.9" width="18.2" height="0.7" fill="#3a3030"/><rect x="218.8" y="567.0" width="18.2" height="0.7" fill="#3a3030"/><rect x="274.0" y="567.0" width="18.2" height="0.7" fill="#3a3030"/><rect x="234.6" y="544.6" width="41.2" height="22.8" fill="#2e2e2e"/><rect x="236.0" y="544.9" width="38.9" height="4.4" fill="#7fc97f"/><rect x="236.0" y="563.1" width="38.9" height="4.1" fill="#7fc97f"/><rect x="230.2" y="544.9" width="4.2" height="22.3" fill="#7fc97f"/><rect x="276.3" y="544.9" width="4.2" height="22.3" fill="#7fc97f"/><rect x="225.5" y="553.1" width="2.6" height="5.7" fill="#7fc97f"/><rect x="282.5" y="553.1" width="2.6" height="5.7" fill="#7fc97f"/><rect x="228.1" y="554.3" width="7.9" height="3.6" fill="#2a2a2a"/><rect x="274.6" y="554.3" width="7.9" height="3.6" fill="#2a2a2a"/><rect x="238.0" y="549.2" width="34.6" height="0.6" fill="#c8c8c8"/><rect x="238.0" y="562.6" width="34.6" height="0.6" fill="#c8c8c8"/><rect x="236.2" y="551.0" width="1.0" height="10.5" fill="#e8e000"/><rect x="273.8" y="551.0" width="1.0" height="10.5" fill="#e8e000"/><rect x="230.4" y="537.4" width="1.2" height="1.2" fill="#e8e000"/><rect x="230.9" y="540.4" width="1.2" height="1.2" fill="#e8e000"/><rect x="232.4" y="545.9" width="1.2" height="1.2" fill="#e8e000"/><rect x="231.4" y="547.4" width="1.2" height="1.2" fill="#e8e000"/><rect x="247.4" y="545.4" width="1.2" height="1.2" fill="#e8e000"/><rect x="251.4" y="546.9" width="1.2" height="1.2" fill="#e8e000"/><rect x="256.4" y="546.2" width="1.2" height="1.2" fill="#e8e000"/><rect x="261.4" y="547.0" width="1.2" height="1.2" fill="#e8e000"/><rect x="267.4" y="545.8" width="1.2" height="1.2" fill="#e8e000"/><rect x="240.4" y="564.0" width="1.2" height="1.2" fill="#e8e000"/><rect x="245.4" y="564.9" width="1.2" height="1.2" fill="#e8e000"/><rect x="252.4" y="564.4" width="1.2" height="1.2" fill="#e8e000"/><rect x="261.4" y="564.2" width="1.2" height="1.2" fill="#e8e000"/><rect x="264.4" y="565.0" width="1.2" height="1.2" fill="#e8e000"/><rect x="228.4" y="570.4" width="1.2" height="1.2" fill="#e8e000"/><rect x="246.4" y="568.4" width="1.2" height="1.2" fill="#e8e000"/><rect x="259.4" y="568.9" width="1.2" height="1.2" fill="#e8e000"/><rect x="276.4" y="570.4" width="1.2" height="1.2" fill="#e8e000"/><rect x="278.4" y="545.4" width="1.2" height="1.2" fill="#e8e000"/><rect x="249.9" y="539.7" width="1.2" height="1.2" fill="#e8e000"/><rect x="221.4" y="568.4" width="1.2" height="1.2" fill="#e8e000"/><path d="M255.2,556.1 L242.2,555.7" stroke="#00e5ee" stroke-width="0.7"/><path d="M255.2,556.1 L266.6,559.3" stroke="#00e5ee" stroke-width="0.7"/><path d="M255.2,556.1 L241.9,556.2" stroke="#00e5ee" stroke-width="0.7"/><path d="M255.2,556.1 L267.4,553.6" stroke="#00e5ee" stroke-width="0.7"/><path d="M255.2,556.1 L240.2,557.3" stroke="#00e5ee" stroke-width="0.7"/><path d="M255.2,556.1 L265.3,553.4" stroke="#00e5ee" stroke-width="0.7"/><path d="M255.2,556.1 L240.8,552.2" stroke="#e020e0" stroke-width="0.7"/><path d="M255.2,556.1 L263.5,557.1" stroke="#00e5ee" stroke-width="0.7"/><path d="M255.2,556.1 L239.9,561.0" stroke="#00e5ee" stroke-width="0.7"/><path d="M255.2,556.1 L268.6,557.4" stroke="#00e5ee" stroke-width="0.7"/><path d="M255.2,556.1 L247.4,554.4" stroke="#00e5ee" stroke-width="0.7"/><path d="M255.2,556.1 L263.7,556.3" stroke="#00e5ee" stroke-width="0.7"/><path d="M255.2,556.1 L245.4,554.1" stroke="#e020e0" stroke-width="0.7"/><path d="M255.2,556.1 L266.4,552.6" stroke="#00e5ee" stroke-width="0.7"/><path d="M255.2,556.1 L239.6,555.5" stroke="#00e5ee" stroke-width="0.7"/><path d="M255.2,556.1 L269.0,556.3" stroke="#00e5ee" stroke-width="0.7"/><path d="M255.2,556.1 L241.2,556.1" stroke="#00e5ee" stroke-width="0.7"/><path d="M255.2,556.1 L265.7,555.8" stroke="#00e5ee" stroke-width="0.7"/><path d="M255.2,556.1 L239.7,561.3" stroke="#00e5ee" stroke-width="0.7"/><path d="M255.2,556.1 L269.0,559.1" stroke="#00e5ee" stroke-width="0.7"/><path d="M255.2,556.1 L245.3,554.9" stroke="#00e5ee" stroke-width="0.7"/><path d="M255.2,556.1 L263.7,555.0" stroke="#00e5ee" stroke-width="0.7"/><path d="M255.2,556.1 L243.9,558.0" stroke="#00e5ee" stroke-width="0.7"/><path d="M255.2,556.1 L266.2,558.6" stroke="#00e5ee" stroke-width="0.7"/><path d="M255.2,556.1 L240.7,560.5" stroke="#00e5ee" stroke-width="0.7"/><path d="M255.2,556.1 L264.2,553.1" stroke="#00e5ee" stroke-width="0.7"/><path d="M255.2,556.1 L243.7,559.2" stroke="#00e5ee" stroke-width="0.7"/><path d="M255.2,556.1 L265.9,559.5" stroke="#00e5ee" stroke-width="0.7"/><path d="M255.2,556.1 L242.4,552.5" stroke="#00e5ee" stroke-width="0.7"/><path d="M255.2,556.1 L265.3,557.9" stroke="#00e5ee" stroke-width="0.7"/><path d="M255.2,556.1 L244.9,553.3" stroke="#e020e0" stroke-width="0.7"/><path d="M255.2,556.1 L268.9,560.3" stroke="#00e5ee" stroke-width="0.7"/><path d="M255.2,556.1 L245.5,553.7" stroke="#00e5ee" stroke-width="0.7"/><path d="M255.2,556.1 L263.3,554.0" stroke="#00e5ee" stroke-width="0.7"/><path d="M255.2,556.1 L245.9,557.9" stroke="#00e5ee" stroke-width="0.7"/><path d="M255.2,556.1 L267.2,556.5" stroke="#00e5ee" stroke-width="0.7"/><path d="M255.2,556.1 L241.1,553.3" stroke="#e020e0" stroke-width="0.7"/><path d="M255.2,556.1 L268.3,553.0" stroke="#00e5ee" stroke-width="0.7"/><path d="M255.2,556.1 L244.0,553.3" stroke="#00e5ee" stroke-width="0.7"/><path d="M255.2,556.1 L265.3,554.2" stroke="#00e5ee" stroke-width="0.7"/><path d="M255.2,556.1 L241.1,560.5" stroke="#00e5ee" stroke-width="0.7"/><path d="M255.2,556.1 L270.9,554.1" stroke="#00e5ee" stroke-width="0.7"/><path d="M255.2,556.1 L244.0,554.0" stroke="#e020e0" stroke-width="0.7"/><path d="M255.2,556.1 L268.4,559.1" stroke="#00e5ee" stroke-width="0.7"/><path d="M255.2,556.1 L239.2,551.9" stroke="#00e5ee" stroke-width="0.7"/><path d="M255.2,556.1 L265.2,554.3" stroke="#00e5ee" stroke-width="0.7"/><path d="M255.2,556.1 L382.9,523.3" stroke="#b4d8e0" stroke-width="0.9"/><path d="M255.2,556.1 L382.9,588.2" stroke="#b4d8e0" stroke-width="0.9"/><path d="M255.2,556.1 L251.7,612.3" stroke="#b4d8e0" stroke-width="0.9"/><path d="M255.2,556.1 L239,561.2" stroke="#b4d8e0" stroke-width="0.9"/><circle cx="255.2" cy="556.1" r="1.7" fill="#ff1010"/><path d="M296.6,551.4 L299.6,551.4 L299.4,548.6 L297.6,545.6 Z" fill="#ff1010"/><rect x="334.2" y="537.5" width="1.6" height="7.0" fill="#f0801a"/><rect x="333.0" y="544.2" width="4.0" height="1.4" fill="#f0801a"/><rect x="341.2" y="534.5" width="1.2" height="8.0" fill="#f0801a"/><rect x="343.2" y="534.5" width="1.2" height="8.0" fill="#f0801a"/><rect x="341.0" y="538.8" width="4.0" height="1.3" fill="#f0801a"/><rect x="333.2" y="567.2" width="1.6" height="9.0" fill="#f0801a"/><rect x="332.6" y="575.6" width="3.4" height="1.4" fill="#f0801a"/><rect x="340.4" y="570.6" width="1.2" height="8.0" fill="#f0801a"/><rect x="342.4" y="570.6" width="1.2" height="8.0" fill="#f0801a"/><rect x="340.8" y="577.2" width="3.6" height="2.0" fill="#f0801a"/><rect x="180.4" y="498.9" width="1.2" height="1.2" fill="#f0801a"/><rect x="187.4" y="498.4" width="1.2" height="1.2" fill="#f0801a"/><rect x="203.4" y="500.4" width="1.2" height="1.2" fill="#f0801a"/><rect x="168.4" y="513.9" width="1.2" height="1.2" fill="#f0801a"/><rect x="170.9" y="521.9" width="1.2" height="1.2" fill="#f0801a"/><rect x="236.4" y="512.9" width="1.2" height="1.2" fill="#f0801a"/><rect x="233.4" y="516.7" width="1.2" height="1.2" fill="#f0801a"/><rect x="243.4" y="518.4" width="1.2" height="1.2" fill="#f0801a"/><rect x="209.4" y="529.9" width="1.2" height="1.2" fill="#f0801a"/><rect x="214.9" y="531.2" width="1.2" height="1.2" fill="#f0801a"/><rect x="292.4" y="499.4" width="1.2" height="1.2" fill="#f0801a"/><rect x="300.4" y="511.9" width="1.2" height="1.2" fill="#f0801a"/><rect x="302.4" y="512.9" width="1.2" height="1.2" fill="#f0801a"/><rect x="295.4" y="519.4" width="1.2" height="1.2" fill="#f0801a"/><rect x="339.4" y="511.4" width="1.2" height="1.2" fill="#f0801a"/><rect x="382.4" y="518.4" width="1.2" height="1.2" fill="#f0801a"/><rect x="382.9" y="587.9" width="1.2" height="1.2" fill="#f0801a"/><rect x="251.2" y="610.9" width="1.2" height="1.2" fill="#f0801a"/><rect x="254.0" y="579.6" width="1.2" height="1.2" fill="#f0801a"/><rect x="209.4" y="567.4" width="1.2" height="1.2" fill="#f0801a"/><rect x="212.4" y="574.9" width="1.2" height="1.2" fill="#f0801a"/><rect x="261.4" y="580.9" width="1.2" height="1.2" fill="#f0801a"/><rect x="275.4" y="580.9" width="1.2" height="1.2" fill="#f0801a"/><rect x="289.4" y="583.4" width="1.2" height="1.2" fill="#f0801a"/><rect x="298.4" y="567.4" width="1.2" height="1.2" fill="#f0801a"/><rect x="301.4" y="578.4" width="1.2" height="1.2" fill="#f0801a"/><rect x="319.4" y="578.4" width="1.2" height="1.2" fill="#f0801a"/><rect x="249.4" y="597.9" width="1.2" height="1.2" fill="#f0801a"/><rect x="264.4" y="597.9" width="1.2" height="1.2" fill="#f0801a"/><rect x="229.4" y="608.4" width="1.2" height="1.2" fill="#f0801a"/><rect x="274.4" y="611.4" width="1.2" height="1.2" fill="#f0801a"/><rect x="327.4" y="604.4" width="1.2" height="1.2" fill="#f0801a"/><rect x="304.4" y="593.4" width="1.2" height="1.2" fill="#f0801a"/><rect x="313.4" y="598.4" width="1.2" height="1.2" fill="#f0801a"/><rect x="380.4" y="617.4" width="1.2" height="1.2" fill="#f0801a"/><rect x="170.4" y="582.4" width="1.2" height="1.2" fill="#f0801a"/><rect x="302.4" y="545.9" width="1.2" height="1.2" fill="#f0801a"/><rect x="297.9" y="561.9" width="1.2" height="1.2" fill="#f0801a"/><rect x="333.8" y="606.4" width="1.6" height="1.4" fill="#00e5ee"/><rect x="199.4" y="594.6" width="1.0" height="1.4" fill="#00e5ee"/></svg>
<svg style="left:0;top:484px" width="490" height="166" viewBox="0 484 490 166" font-family="DejaVu Sans, Liberation Sans, sans-serif"><path d="M22.9,486.6 L22.9,626.8 L487.4,626.8" stroke="#f4f8ff" stroke-width="1" fill="none"/><path d="M22.2,486.6 L22.2,627.5 L487.4,627.5" stroke="#444" stroke-width="0.6" fill="none"/><path d="M50.4,627.6 L50.4,631.2" stroke="#222" stroke-width="0.9"/><path d="M79.7,627.6 L79.7,631.2" stroke="#222" stroke-width="0.9"/><path d="M109.0,627.6 L109.0,631.2" stroke="#222" stroke-width="0.9"/><path d="M138.2,627.6 L138.2,634.6" stroke="#222" stroke-width="0.9"/><path d="M167.5,627.6 L167.5,631.2" stroke="#222" stroke-width="0.9"/><path d="M196.8,627.6 L196.8,631.2" stroke="#222" stroke-width="0.9"/><path d="M226.0,627.6 L226.0,631.2" stroke="#222" stroke-width="0.9"/><path d="M255.3,627.6 L255.3,634.6" stroke="#222" stroke-width="0.9"/><path d="M284.6,627.6 L284.6,631.2" stroke="#222" stroke-width="0.9"/><path d="M313.8,627.6 L313.8,631.2" stroke="#222" stroke-width="0.9"/><path d="M343.1,627.6 L343.1,631.2" stroke="#222" stroke-width="0.9"/><path d="M372.4,627.6 L372.4,634.6" stroke="#222" stroke-width="0.9"/><path d="M401.6,627.6 L401.6,631.2" stroke="#222" stroke-width="0.9"/><path d="M430.9,627.6 L430.9,631.2" stroke="#222" stroke-width="0.9"/><path d="M460.2,627.6 L460.2,631.2" stroke="#222" stroke-width="0.9"/><path d="M18.9,620.9 L22.3,620.9" stroke="#222" stroke-width="0.9"/><path d="M18.9,615.6 L22.3,615.6" stroke="#222" stroke-width="0.9"/><path d="M15.3,610.2 L22.3,610.2" stroke="#222" stroke-width="0.9"/><path d="M18.9,604.8 L22.3,604.8" stroke="#222" stroke-width="0.9"/><path d="M18.9,599.5 L22.3,599.5" stroke="#222" stroke-width="0.9"/><path d="M18.9,594.1 L22.3,594.1" stroke="#222" stroke-width="0.9"/><path d="M18.9,588.8 L22.3,588.8" stroke="#222" stroke-width="0.9"/><path d="M15.3,583.4 L22.3,583.4" stroke="#222" stroke-width="0.9"/><path d="M18.9,578.0 L22.3,578.0" stroke="#222" stroke-width="0.9"/><path d="M18.9,572.7 L22.3,572.7" stroke="#222" stroke-width="0.9"/><path d="M18.9,567.3 L22.3,567.3" stroke="#222" stroke-width="0.9"/><path d="M18.9,562.0 L22.3,562.0" stroke="#222" stroke-width="0.9"/><path d="M15.3,556.6 L22.3,556.6" stroke="#222" stroke-width="0.9"/><path d="M18.9,551.2 L22.3,551.2" stroke="#222" stroke-width="0.9"/><path d="M18.9,545.9 L22.3,545.9" stroke="#222" stroke-width="0.9"/><path d="M18.9,540.5 L22.3,540.5" stroke="#222" stroke-width="0.9"/><path d="M18.9,535.2 L22.3,535.2" stroke="#222" stroke-width="0.9"/><path d="M15.3,529.8 L22.3,529.8" stroke="#222" stroke-width="0.9"/><path d="M18.9,524.4 L22.3,524.4" stroke="#222" stroke-width="0.9"/><path d="M18.9,519.1 L22.3,519.1" stroke="#222" stroke-width="0.9"/><path d="M18.9,513.7 L22.3,513.7" stroke="#222" stroke-width="0.9"/><path d="M18.9,508.4 L22.3,508.4" stroke="#222" stroke-width="0.9"/><path d="M15.3,503.0 L22.3,503.0" stroke="#222" stroke-width="0.9"/><path d="M18.9,497.6 L22.3,497.6" stroke="#222" stroke-width="0.9"/><path d="M18.9,492.3 L22.3,492.3" stroke="#222" stroke-width="0.9"/><text x="141" y="642" font-size="8.4" text-anchor="middle" fill="#222" font-weight="bold">-20</text><text x="254.6" y="642" font-size="8.4" text-anchor="middle" fill="#222" font-weight="bold">0</text><text x="321.7" y="642" font-size="8.4" text-anchor="middle" fill="#222" font-weight="bold">Z (m)</text><text x="373.6" y="642" font-size="8.4" text-anchor="middle" fill="#222" font-weight="bold">20</text><text x="16" y="502" font-size="8.4" text-anchor="middle" fill="#222" font-weight="bold" transform="rotate(-90 16 502)">10</text><text x="16" y="524" font-size="8.4" text-anchor="middle" fill="#222" font-weight="bold" transform="rotate(-90 16 524)">ρ (m)</text><text x="16" y="557" font-size="8.4" text-anchor="middle" fill="#222" font-weight="bold" transform="rotate(-90 16 557)">0</text><text x="16" y="606" font-size="8.4" text-anchor="middle" fill="#222" font-weight="bold" transform="rotate(-90 16 606)">-10</text></svg>
<!-- track momenta window -->
<div style="left:494.90px;top:123.80px;width:360.00px;height:311.00px;background:#d8d8d8;"></div>
<div style="left:497.00px;top:126.10px;width:356.50px;height:11.60px;background:#4a5161;border:1.2px solid #000;"></div><div class="t" style="top:128px;font-size:8.95px;color:#dadada;white-space:pre;font-weight:bold;-webkit-text-stroke:0;left:512.30px;">HYPATIA - Track Momenta Window</div>
<div style="left:497.00px;top:137.70px;width:357.00px;height:28.80px;background:linear-gradient(#ffffff 0%,#f6f8fc 30%,#dde6f2 58%,#c0d1e7 100%);"></div>
<div class="t" style="top:155px;font-size:8.4px;color:#333;white-space:pre;font-weight:bold;-webkit-text-stroke:0;left:341.40px;width:400px;text-align:center;">Previous Event</div>
<div class="t" style="top:155px;font-size:8.4px;color:#333;white-space:pre;font-weight:bold;-webkit-text-stroke:0;left:420.60px;width:400px;text-align:center;">Next Event</div>
<div class="t" style="top:155px;font-size:8.4px;color:#333;white-space:pre;font-weight:bold;-webkit-text-stroke:0;left:496.80px;width:400px;text-align:center;">Insert Electron</div>
<div class="t" style="top:155px;font-size:8.4px;color:#333;white-space:pre;font-weight:bold;-webkit-text-stroke:0;left:578.60px;width:400px;text-align:center;">Insert Muon</div>
<div class="t" style="top:155px;font-size:8.4px;color:#333;white-space:pre;font-weight:bold;-webkit-text-stroke:0;left:824.50px;">Delete Track</div>
<div style="left:497.00px;top:166.50px;width:357.00px;height:11.80px;background:#ebebeb;border-top:1px solid #d0d0d0;border-bottom:1px solid #c8c8c8;"></div>
<div class="t" style="top:168px;font-size:7.72px;color:#333;white-space:pre;font-weight:bold;-webkit-text-stroke:0;font-family:'DejaVu Sans Mono','Liberation Mono',monospace;left:513.00px;">ETMis: 4.296 GeV</div>
<div class="t" style="top:168px;font-size:7.72px;color:#333;white-space:pre;font-weight:bold;-webkit-text-stroke:0;font-family:'DejaVu Sans Mono','Liberation Mono',monospace;left:612.20px;">φ: 2.211 rad</div>
<div class="t" style="top:168px;font-size:7.72px;color:#333;white-space:pre;font-weight:bold;-webkit-text-stroke:0;font-family:'DejaVu Sans Mono','Liberation Mono',monospace;left:691.60px;">Collection: MET_RefFinal</div>
<div style="left:497.00px;top:178.30px;width:357.00px;height:20.40px;background:#ededed;border-bottom:1px solid #cfcfcf;"></div>
<div style="left:499.60px;top:180.00px;width:6.20px;height:15.00px;background-image:radial-gradient(circle,#b0b0b0 0.5px,transparent 0.7px);background-size:2px 2px;"></div>
<div style="left:508.80px;top:179.40px;width:14.40px;height:14.00px;background:#f4f4f4;border:1px solid #b8b8b8;"></div>
<div style="left:522.80px;top:178.90px;width:218.00px;height:16.30px;background:#fff;border:1px solid #b4b8c0;overflow:hidden;"><div class="t" style="right:0.6px;top:2.4px;font-size:8.1px;line-height:10px;color:#333;white-space:pre;">/home/user/MasterClass/zpath/Mus/JiveXML_166466_46509996.xml</div></div>
<div style="left:743.00px;top:180.30px;width:13.20px;height:13.40px;background:#f6f6f6;border:1px solid #b8b8b8;"></div>
<div style="left:757.30px;top:180.30px;width:13.20px;height:13.40px;background:#f6f6f6;border:1px solid #b8b8b8;"></div>
<div style="left:778.00px;top:178.60px;width:76.00px;height:19.60px;background:#f4f4f4;"></div>
<div style="left:497.00px;top:200.20px;width:357.00px;height:12.60px;background:#eeeeee;"></div>
<div style="left:498.20px;top:201.30px;width:249.80px;height:12.00px;background:#c6daf2;border:1px solid #8aa8d2;border-bottom:none;border-radius:3px 0 0 0;"></div>
<div class="t" style="top:201px;font-size:8.9px;color:#333;white-space:pre;font-weight:bold;-webkit-text-stroke:0;left:422.80px;width:400px;text-align:center;">Reconstructed Tracks</div>
<div style="left:497.00px;top:212.40px;width:355.00px;height:219.30px;background:#c6daf2;border:1px solid #8fa9cf;"></div>
<div style="left:498.60px;top:216.60px;width:351.40px;height:212.60px;background:#eeeeee;border:1px solid #8fa9cf;"></div>
<div style="left:499.40px;top:219.00px;width:349.50px;height:208.90px;overflow:hidden;background:#eee;"><div style="left:0.00px;top:0.50px;width:349.20px;height:9.00px;background:linear-gradient(#f6f6f6,#e9e9e9);overflow:hidden;"><div class="t" style="top:0px;font-size:8.1px;color:#333;white-space:pre;left:-147.80px;width:400px;text-align:center;">Track</div><div class="t" style="top:0px;font-size:8.1px;color:#333;white-space:pre;left:-85.80px;width:400px;text-align:center;">+/-</div><div class="t" style="top:0px;font-size:8.1px;color:#333;white-space:pre;left:-48.90px;width:400px;text-align:center;">P [GeV]</div><div class="t" style="top:0px;font-size:8.1px;color:#333;white-space:pre;left:4.80px;width:400px;text-align:center;">Pt [GeV]</div><div class="t" style="top:0px;font-size:8.1px;color:#333;white-space:pre;left:58.10px;width:400px;text-align:center;">φ</div><div class="t" style="top:0px;font-size:8.1px;color:#333;white-space:pre;left:111.50px;width:400px;text-align:center;">θ</div></div><div style="left:0.00px;top:9.50px;width:338.20px;height:300.00px;background:#fff;"></div><div style="left:0.00px;top:9.00px;width:338.20px;height:1.00px;background:#9aabc0;"></div><div class="t" style="top:10px;font-size:8.1px;color:#333;white-space:pre;left:1.70px;">Tracks 1</div><div class="t" style="top:10px;font-size:8.1px;color:#333;white-space:pre;left:106.10px;">-</div><div class="t" style="top:10px;font-size:8.1px;color:#333;white-space:pre;left:125.70px;">10.76</div><div class="t" style="top:10px;font-size:8.1px;color:#333;white-space:pre;left:179.90px;">1.77</div><div class="t" style="top:10px;font-size:8.1px;color:#333;white-space:pre;left:233.10px;">0.619</div><div class="t" style="top:10px;font-size:8.1px;color:#333;white-space:pre;left:286.50px;">0.166</div><div style="left:0.00px;top:19.75px;width:338.20px;height:1.00px;background:#9aabc0;"></div><div class="t" style="top:21px;font-size:8.1px;color:#333;white-space:pre;left:1.70px;">Tracks 3</div><div class="t" style="top:21px;font-size:8.1px;color:#333;white-space:pre;left:106.10px;">+</div><div class="t" style="top:21px;font-size:8.1px;color:#333;white-space:pre;left:125.70px;">13.35</div><div class="t" style="top:21px;font-size:8.1px;color:#333;white-space:pre;left:179.90px;">2.43</div><div class="t" style="top:21px;font-size:8.1px;color:#333;white-space:pre;left:233.10px;">0.667</div><div class="t" style="top:21px;font-size:8.1px;color:#333;white-space:pre;left:286.50px;">0.183</div><div style="left:0.00px;top:30.50px;width:338.20px;height:1.00px;background:#9aabc0;"></div><div class="t" style="top:31px;font-size:8.1px;color:#333;white-space:pre;left:1.70px;">Tracks 5</div><div class="t" style="top:31px;font-size:8.1px;color:#333;white-space:pre;left:106.10px;">+</div><div class="t" style="top:31px;font-size:8.1px;color:#333;white-space:pre;left:125.70px;">150.59</div><div class="t" style="top:31px;font-size:8.1px;color:#333;white-space:pre;left:179.90px;">40.91</div><div class="t" style="top:31px;font-size:8.1px;color:#333;white-space:pre;left:233.10px;">-0.445</div><div class="t" style="top:31px;font-size:8.1px;color:#333;white-space:pre;left:286.50px;">0.275</div><div style="left:0.00px;top:41.25px;width:338.20px;height:1.00px;background:#9aabc0;"></div><div class="t" style="top:42px;font-size:8.1px;color:#333;white-space:pre;left:1.70px;">Tracks 6</div><div class="t" style="top:42px;font-size:8.1px;color:#333;white-space:pre;left:106.10px;">-</div><div class="t" style="top:42px;font-size:8.1px;color:#333;white-space:pre;left:125.70px;">3.36</div><div class="t" style="top:42px;font-size:8.1px;color:#333;white-space:pre;left:179.90px;">1.17</div><div class="t" style="top:42px;font-size:8.1px;color:#333;white-space:pre;left:233.10px;">-1.062</div><div class="t" style="top:42px;font-size:8.1px;color:#333;white-space:pre;left:286.50px;">0.356</div><div style="left:0.00px;top:52.00px;width:338.20px;height:1.00px;background:#9aabc0;"></div><div class="t" style="top:53px;font-size:8.1px;color:#333;white-space:pre;left:1.70px;">Tracks 9</div><div class="t" style="top:53px;font-size:8.1px;color:#333;white-space:pre;left:106.10px;">-</div><div class="t" style="top:53px;font-size:8.1px;color:#333;white-space:pre;left:125.70px;">34.07</div><div class="t" style="top:53px;font-size:8.1px;color:#333;white-space:pre;left:179.90px;">34.03</div><div class="t" style="top:53px;font-size:8.1px;color:#333;white-space:pre;left:233.10px;">-2.726</div><div class="t" style="top:53px;font-size:8.1px;color:#333;white-space:pre;left:286.50px;">1.618</div><div style="left:0.00px;top:62.75px;width:338.20px;height:1.00px;background:#9aabc0;"></div><div class="t" style="top:64px;font-size:8.1px;color:#333;white-space:pre;left:1.70px;">Tracks 10</div><div class="t" style="top:64px;font-size:8.1px;color:#333;white-space:pre;left:106.10px;">+</div><div class="t" style="top:64px;font-size:8.1px;color:#333;white-space:pre;left:125.70px;">5.14</div><div class="t" style="top:64px;font-size:8.1px;color:#333;white-space:pre;left:179.90px;">1.02</div><div class="t" style="top:64px;font-size:8.1px;color:#333;white-space:pre;left:233.10px;">-1.443</div><div class="t" style="top:64px;font-size:8.1px;color:#333;white-space:pre;left:286.50px;">0.200</div><div style="left:0.00px;top:73.50px;width:338.20px;height:1.00px;background:#9aabc0;"></div><div class="t" style="top:74px;font-size:8.1px;color:#333;white-space:pre;left:1.70px;">Tracks 12</div><div class="t" style="top:74px;font-size:8.1px;color:#333;white-space:pre;left:106.10px;">+</div><div class="t" style="top:74px;font-size:8.1px;color:#333;white-space:pre;left:125.70px;">7.58</div><div class="t" style="top:74px;font-size:8.1px;color:#333;white-space:pre;left:179.90px;">2.35</div><div class="t" style="top:74px;font-size:8.1px;color:#333;white-space:pre;left:233.10px;">-0.048</div><div class="t" style="top:74px;font-size:8.1px;color:#333;white-space:pre;left:286.50px;">2.827</div><div style="left:0.00px;top:84.25px;width:338.20px;height:1.00px;background:#9aabc0;"></div><div class="t" style="top:85px;font-size:8.1px;color:#333;white-space:pre;left:1.70px;">Tracks 15</div><div class="t" style="top:85px;font-size:8.1px;color:#333;white-space:pre;left:106.10px;">+</div><div class="t" style="top:85px;font-size:8.1px;color:#333;white-space:pre;left:125.70px;">2.31</div><div class="t" style="top:85px;font-size:8.1px;color:#333;white-space:pre;left:179.90px;">1.64</div><div class="t" style="top:85px;font-size:8.1px;color:#333;white-space:pre;left:233.10px;">-1.502</div><div class="t" style="top:85px;font-size:8.1px;color:#333;white-space:pre;left:286.50px;">0.791</div><div style="left:0.00px;top:95.00px;width:338.20px;height:1.00px;background:#9aabc0;"></div><div class="t" style="top:96px;font-size:8.1px;color:#333;white-space:pre;left:1.70px;">Tracks 16</div><div class="t" style="top:96px;font-size:8.1px;color:#333;white-space:pre;left:106.10px;">+</div><div class="t" style="top:96px;font-size:8.1px;color:#333;white-space:pre;left:125.70px;">1.62</div><div class="t" style="top:96px;font-size:8.1px;color:#333;white-space:pre;left:179.90px;">1.61</div><div class="t" style="top:96px;font-size:8.1px;color:#333;white-space:pre;left:233.10px;">0.581</div><div class="t" style="top:96px;font-size:8.1px;color:#333;white-space:pre;left:286.50px;">1.667</div><div style="left:0.00px;top:105.75px;width:338.20px;height:1.00px;background:#9aabc0;"></div><div class="t" style="top:107px;font-size:8.1px;color:#333;white-space:pre;left:1.70px;">Tracks 17</div><div class="t" style="top:107px;font-size:8.1px;color:#333;white-space:pre;left:106.10px;">-</div><div class="t" style="top:107px;font-size:8.1px;color:#333;white-space:pre;left:125.70px;">3.47</div><div class="t" style="top:107px;font-size:8.1px;color:#333;white-space:pre;left:179.90px;">1.17</div><div class="t" style="top:107px;font-size:8.1px;color:#333;white-space:pre;left:233.10px;">-3.059</div><div class="t" style="top:107px;font-size:8.1px;color:#333;white-space:pre;left:286.50px;">0.345</div><div style="left:0.00px;top:116.50px;width:338.20px;height:1.00px;background:#9aabc0;"></div><div class="t" style="top:117px;font-size:8.1px;color:#333;white-space:pre;left:1.70px;">Tracks 18</div><div class="t" style="top:117px;font-size:8.1px;color:#333;white-space:pre;left:106.10px;">-</div><div class="t" style="top:117px;font-size:8.1px;color:#333;white-space:pre;left:125.70px;">6.38</div><div class="t" style="top:117px;font-size:8.1px;color:#333;white-space:pre;left:179.90px;">1.25</div><div class="t" style="top:117px;font-size:8.1px;color:#333;white-space:pre;left:233.10px;">-0.115</div><div class="t" style="top:117px;font-size:8.1px;color:#333;white-space:pre;left:286.50px;">0.197</div><div style="left:0.00px;top:127.25px;width:338.20px;height:1.00px;background:#9aabc0;"></div><div class="t" style="top:128px;font-size:8.1px;color:#333;white-space:pre;left:1.70px;">Tracks 19</div><div class="t" style="top:128px;font-size:8.1px;color:#333;white-space:pre;left:106.10px;">-</div><div class="t" style="top:128px;font-size:8.1px;color:#333;white-space:pre;left:125.70px;">2.17</div><div class="t" style="top:128px;font-size:8.1px;color:#333;white-space:pre;left:179.90px;">2.11</div><div class="t" style="top:128px;font-size:8.1px;color:#333;white-space:pre;left:233.10px;">-2.556</div><div class="t" style="top:128px;font-size:8.1px;color:#333;white-space:pre;left:286.50px;">1.326</div><div style="left:0.00px;top:138.00px;width:338.20px;height:1.00px;background:#9aabc0;"></div><div class="t" style="top:139px;font-size:8.1px;color:#333;white-space:pre;left:1.70px;">Tracks 20</div><div class="t" style="top:139px;font-size:8.1px;color:#333;white-space:pre;left:106.10px;">+</div><div class="t" style="top:139px;font-size:8.1px;color:#333;white-space:pre;left:125.70px;">14.73</div><div class="t" style="top:139px;font-size:8.1px;color:#333;white-space:pre;left:179.90px;">5.77</div><div class="t" style="top:139px;font-size:8.1px;color:#333;white-space:pre;left:233.10px;">2.587</div><div class="t" style="top:139px;font-size:8.1px;color:#333;white-space:pre;left:286.50px;">2.739</div><div style="left:0.00px;top:148.75px;width:338.20px;height:1.00px;background:#9aabc0;"></div><div class="t" style="top:150px;font-size:8.1px;color:#333;white-space:pre;left:1.70px;">Tracks 22</div><div class="t" style="top:150px;font-size:8.1px;color:#333;white-space:pre;left:106.10px;">+</div><div class="t" style="top:150px;font-size:8.1px;color:#333;white-space:pre;left:125.70px;">2.25</div><div class="t" style="top:150px;font-size:8.1px;color:#333;white-space:pre;left:179.90px;">1.46</div><div class="t" style="top:150px;font-size:8.1px;color:#333;white-space:pre;left:233.10px;">-0.376</div><div class="t" style="top:150px;font-size:8.1px;color:#333;white-space:pre;left:286.50px;">2.435</div><div style="left:0.00px;top:159.50px;width:338.20px;height:1.00px;background:#9aabc0;"></div><div class="t" style="top:160px;font-size:8.1px;color:#333;white-space:pre;left:1.70px;">Tracks 24</div><div class="t" style="top:160px;font-size:8.1px;color:#333;white-space:pre;left:106.10px;">-</div><div class="t" style="top:160px;font-size:8.1px;color:#333;white-space:pre;left:125.70px;">3.14</div><div class="t" style="top:160px;font-size:8.1px;color:#333;white-space:pre;left:179.90px;">2.48</div><div class="t" style="top:160px;font-size:8.1px;color:#333;white-space:pre;left:233.10px;">1.965</div><div class="t" style="top:160px;font-size:8.1px;color:#333;white-space:pre;left:286.50px;">2.231</div><div style="left:0.00px;top:170.25px;width:338.20px;height:1.00px;background:#9aabc0;"></div><div class="t" style="top:171px;font-size:8.1px;color:#333;white-space:pre;left:1.70px;">Tracks 26</div><div class="t" style="top:171px;font-size:8.1px;color:#333;white-space:pre;left:106.10px;">-</div><div class="t" style="top:171px;font-size:8.1px;color:#333;white-space:pre;left:125.70px;">3.64</div><div class="t" style="top:171px;font-size:8.1px;color:#333;white-space:pre;left:179.90px;">1.17</div><div class="t" style="top:171px;font-size:8.1px;color:#333;white-space:pre;left:233.10px;">2.667</div><div class="t" style="top:171px;font-size:8.1px;color:#333;white-space:pre;left:286.50px;">2.815</div><div style="left:0.00px;top:181.00px;width:338.20px;height:1.00px;background:#9aabc0;"></div><div class="t" style="top:182px;font-size:8.1px;color:#333;white-space:pre;left:1.70px;">Tracks 27</div><div class="t" style="top:182px;font-size:8.1px;color:#333;white-space:pre;left:106.10px;">+</div><div class="t" style="top:182px;font-size:8.1px;color:#333;white-space:pre;left:125.70px;">3.29</div><div class="t" style="top:182px;font-size:8.1px;color:#333;white-space:pre;left:179.90px;">1.97</div><div class="t" style="top:182px;font-size:8.1px;color:#333;white-space:pre;left:233.10px;">1.911</div><div class="t" style="top:182px;font-size:8.1px;color:#333;white-space:pre;left:286.50px;">2.501</div><div style="left:0.00px;top:191.75px;width:338.20px;height:1.00px;background:#9aabc0;"></div><div class="t" style="top:193px;font-size:8.1px;color:#333;white-space:pre;left:1.70px;">Tracks 28</div><div class="t" style="top:193px;font-size:8.1px;color:#333;white-space:pre;left:106.10px;">-</div><div class="t" style="top:193px;font-size:8.1px;color:#333;white-space:pre;left:125.70px;">3.85</div><div class="t" style="top:193px;font-size:8.1px;color:#333;white-space:pre;left:179.90px;">1.32</div><div class="t" style="top:193px;font-size:8.1px;color:#333;white-space:pre;left:233.10px;">-0.319</div><div class="t" style="top:193px;font-size:8.1px;color:#333;white-space:pre;left:286.50px;">0.350</div><div style="left:0.00px;top:202.50px;width:338.20px;height:1.00px;background:#9aabc0;"></div><div class="t" style="top:203px;font-size:8.1px;color:#333;white-space:pre;left:1.70px;">Tracks 32</div><div class="t" style="top:203px;font-size:8.1px;color:#333;white-space:pre;left:106.10px;">+</div><div class="t" style="top:203px;font-size:8.1px;color:#333;white-space:pre;left:125.70px;">1.36</div><div class="t" style="top:203px;font-size:8.1px;color:#333;white-space:pre;left:179.90px;">1.30</div><div class="t" style="top:203px;font-size:8.1px;color:#333;white-space:pre;left:233.10px;">-1.151</div><div class="t" style="top:203px;font-size:8.1px;color:#333;white-space:pre;left:286.50px;">1.273</div><div style="left:-0.50px;top:0.00px;width:1.00px;height:300.00px;background:#9aabc0;"></div><div style="left:103.90px;top:0.00px;width:1.00px;height:300.00px;background:#9aabc0;"></div><div style="left:123.50px;top:0.00px;width:1.00px;height:300.00px;background:#9aabc0;"></div><div style="left:177.70px;top:0.00px;width:1.00px;height:300.00px;background:#9aabc0;"></div><div style="left:230.90px;top:0.00px;width:1.00px;height:300.00px;background:#9aabc0;"></div><div style="left:284.30px;top:0.00px;width:1.00px;height:300.00px;background:#9aabc0;"></div><div style="left:337.70px;top:0.00px;width:1.00px;height:300.00px;background:#9aabc0;"></div><div style="left:0.00px;top:0.10px;width:349.20px;height:1.00px;background:#9aabc0;"></div></div>
<div style="left:838.30px;top:229.00px;width:10.40px;height:199.00px;background:#e9e9e9;border-left:1px solid #c8c8c8;"></div>
<div style="left:838.60px;top:229.40px;width:9.80px;height:9.40px;background:#fafafa;border:1px solid #c0c8d4;"></div>
<div style="left:838.60px;top:417.80px;width:9.80px;height:9.60px;background:#fafafa;border:1px solid #c0c8d4;"></div>
<div style="left:838.80px;top:238.90px;width:9.40px;height:50.60px;background:linear-gradient(90deg,#a9bde0,#dfe8f6 45%,#ffffff 80%,#e8eef8);border:1px solid #8fa5cf;"></div>
<div style="left:841.40px;top:263.20px;width:4.60px;height:1.80px;background:#9db0dc;"></div>
<svg width="854" height="650" viewBox="0 0 854 650" font-family="DejaVu Sans, Liberation Sans, sans-serif" style="pointer-events:none"><defs><linearGradient id="arg" x1="0" y1="0" x2="0" y2="1"><stop offset="0" stop-color="#9cc8f2"/><stop offset="0.5" stop-color="#5b9ada"/><stop offset="1" stop-color="#3b78c0"/></linearGradient></defs><path d="M536.80,146.40 L541.80,141.80 L541.80,144.40 L546.40,144.40 L546.40,148.40 L541.80,148.40 L541.80,151.00 Z" fill="url(#arg)" stroke="#2f62a4" stroke-width="0.8" stroke-linejoin="round"/><path d="M623.80,146.40 L618.80,141.80 L618.80,144.40 L614.20,144.40 L614.20,148.40 L618.80,148.40 L618.80,151.00 Z" fill="url(#arg)" stroke="#2f62a4" stroke-width="0.8" stroke-linejoin="round"/><g fill="none" stroke="#4a7fb8"><circle cx="696.6" cy="147.2" r="4" fill="#6a98c6" stroke="#456f9c" stroke-width="0.9"/><path d="M694.6,147.3 L698.8,147.3 A2.2,2.2 0 1 0 698,149" stroke="#e4ecf5" stroke-width="1"/></g><text x="778.8" y="150.4" font-size="11.5" text-anchor="middle" fill="#4a7fb0" font-weight="bold">μ</text><path d="M851.8,142 L855.4,146.6 M851.8,151 L855.4,146.4" stroke="#3f74ac" stroke-width="1.8" fill="none"/><ellipse cx="542.5" cy="151.9" rx="43.4" ry="14.6" fill="none" stroke="#7a3300" stroke-width="1.8"/><ellipse cx="620" cy="152.6" rx="32.6" ry="14.5" fill="none" stroke="#7a3300" stroke-width="1.8"/><ellipse cx="697.3" cy="152.7" rx="42.8" ry="14.6" fill="none" stroke="#0000ff" stroke-width="1.8"/><ellipse cx="780.2" cy="153" rx="37.8" ry="14.9" fill="none" stroke="#0000ff" stroke-width="1.8"/><ellipse cx="547.7" cy="171.2" rx="47.4" ry="7" fill="none" stroke="#ffff00" stroke-width="1.9"/><g><rect x="511.2" y="181.6" width="9.8" height="9.6" fill="#5b8fd0" stroke="#2f62a8" stroke-width="0.8"/><rect x="513" y="181.9" width="6.2" height="4" fill="#fff"/><rect x="512.6" y="187.4" width="7" height="3.4" fill="#dfe9f6"/></g><path d="M744.75,187.00 L749.50,182.63 L749.50,185.10 L753.87,185.10 L753.87,188.90 L749.50,188.90 L749.50,191.37 Z" fill="url(#arg)" stroke="#2f62a4" stroke-width="0.8" stroke-linejoin="round"/><path d="M768.75,187.00 L764.00,182.63 L764.00,185.10 L759.63,185.10 L759.63,188.90 L764.00,188.90 L764.00,191.37 Z" fill="url(#arg)" stroke="#2f62a4" stroke-width="0.8" stroke-linejoin="round"/><g fill="none" stroke="#222" stroke-width="1"><circle cx="785.3" cy="187.3" r="2.9"/><circle cx="785.3" cy="187.3" r="0.9" fill="#222"/><path d="M790,187.3 L795,187.3" stroke-width="1.4"/><path d="M794,185 L797,187.3 L794,189.6 Z" fill="#222" stroke-width="0.6"/></g><g fill="none" stroke="#222" stroke-width="1"><circle cx="809.5" cy="187.3" r="3"/><path d="M815.4,183.2 L815.4,189.6 C815.4,191.6 817.6,191.6 817.8,190.4 M813.8,185 L817.2,185 M820.4,191.4 L820.4,185 C820.4,183 818.2,183 818,184.4 M819,189.6 L820.4,191.6 L821.8,189.6" stroke-width="1.6"/></g><g fill="none" stroke="#222" stroke-width="1"><circle cx="833.5" cy="187.3" r="3"/><path d="M838.4,186.8 L839.6,183.4 C840,182.2 841.4,182.6 841.2,183.8 C841.6,182 843.2,181.6 843.4,183.2 C844,182 845.6,182.4 845.4,184 C846.4,183.4 847.4,184.4 847,185.8 C847.8,188.4 847.4,190.6 846,191.8 C844.2,193 840.6,192.8 839.2,191 C838.2,189.6 838,188.2 838.4,186.8 Z" stroke-width="0.9" fill="#c4c4c4" stroke-dasharray="1.2 0.6"/><path d="M841,185 L841.6,189 M843.2,184.6 L843.6,189 M845.2,185.4 L845.2,189.4" stroke="#444" stroke-width="0.7"/></g><path d="M840.6,235.8 L846.6,235.8 L843.6,232.2 Z M840.8,421 L846.6,421 L843.7,424.4 Z" fill="#111"/></svg>
<div style="left:494.90px;top:431.80px;width:360.00px;height:2.90px;background:#f0f0f0;"></div>
<div style="left:493.30px;top:434.60px;width:361.00px;height:4.60px;background:#000;"></div>
<div style="left:494.90px;top:436.10px;width:360.00px;height:1.50px;background:#f2f2f2;"></div>
<!-- control window -->
<div style="left:494.90px;top:439.20px;width:360.00px;height:208.40px;background:#d8d8d8;"></div>
<div style="left:497.00px;top:441.50px;width:356.50px;height:11.50px;background:#4a5161;border:1.2px solid #000;"></div><div class="t" style="top:444px;font-size:8.95px;color:#dadada;white-space:pre;font-weight:bold;-webkit-text-stroke:0;left:512.50px;">HYPATIA - Control Window</div>
<div style="left:497.00px;top:453.00px;width:357.00px;height:27.50px;background:#eeeeee;"></div>
<div style="left:498.40px;top:457.40px;width:166.60px;height:12.00px;background:#c6daf2;border:1px solid #8aa8d2;border-bottom:none;border-radius:3.5px 0 0 0;"></div>
<div style="left:666.40px;top:457.90px;width:85.80px;height:11.40px;background:#eeeeee;border:1px solid #9fb3cf;border-bottom:none;border-radius:3px 0 0 0;"></div>
<div class="t" style="top:459px;font-size:8.58px;color:#333;white-space:pre;font-weight:bold;-webkit-text-stroke:0;left:504.60px;">Interaction and Window Control</div>
<div class="t" style="top:459px;font-size:8.5px;color:#333;white-space:pre;font-weight:bold;-webkit-text-stroke:0;left:673.20px;">Output Display</div>
<div style="left:498.40px;top:469.20px;width:351.40px;height:11.40px;background:#eeeeee;border:1px solid #9fb3cf;border-bottom:none;border-radius:3px 0 0 0;"></div>
<div class="t" style="top:470px;font-size:8.7px;color:#333;white-space:pre;font-weight:bold;-webkit-text-stroke:0;left:474.00px;width:400px;text-align:center;">Parameter Control</div>
<div style="left:496.60px;top:480.20px;width:357.40px;height:165.80px;background:#eeeeee;border:1px solid #8fa9cf;border-right:none;"></div>
<div style="left:497.60px;top:481.20px;width:356.40px;height:117.80px;background:linear-gradient(#ffffff 0%,#fbfbfb 30%,#e9e9e9 75%,#dedede 100%);"></div>
<div style="left:496.60px;top:645.20px;width:357.40px;height:1.40px;background:#a7bede;"></div>
<div style="left:594.00px;top:487.30px;width:17.90px;height:17.50px;background:#b3c6e0;border:1px solid #8aa0c4;"></div>
<div style="left:616.10px;top:487.30px;width:17.90px;height:17.50px;background:#f4f4f4;border:1px solid #b8b8b8;"></div>
<div style="left:638.30px;top:487.30px;width:17.90px;height:17.50px;background:#f4f4f4;border:1px solid #b8b8b8;"></div>
<div style="left:660.40px;top:487.30px;width:17.90px;height:17.50px;background:#f4f4f4;border:1px solid #b8b8b8;"></div>
<div style="left:682.40px;top:487.30px;width:17.90px;height:17.50px;background:#f4f4f4;border:1px solid #b8b8b8;"></div>
<div style="left:704.50px;top:487.30px;width:17.90px;height:17.50px;background:#f4f4f4;border:1px solid #b8b8b8;"></div>
<div style="left:726.60px;top:487.30px;width:17.90px;height:17.50px;background:#f4f4f4;border:1px solid #b8b8b8;"></div>
<div style="left:749.40px;top:493.00px;width:6.30px;height:6.40px;background:#e2e2e2;"></div>
<svg width="854" height="650" viewBox="0 0 854 650" style="pointer-events:none"><g fill="none"><circle cx="601.4" cy="494.2" r="3.1" fill="#9fd0f0" stroke="#5a96c8" stroke-width="1"/><circle cx="606" cy="493.4" r="2.4" stroke="#6030b0" stroke-width="1.3"/><path d="M603.6,496.6 L608,501.2 M600.4,497 L597.6,501 M599,499.6 L603,499.6" stroke="#8a8a8a" stroke-width="1.1"/></g><g fill="none"><rect x="620.4" y="491.2" width="9.4" height="9.4" stroke="#7aa0c8" stroke-width="0.9" stroke-dasharray="1.4 1"/><path d="M620.8,500.4 L630,491" stroke="#e0b040" stroke-width="1"/></g><g fill="#fff" stroke="#222" stroke-width="0.9"><path d="M646,497 L646,491.2 C646,490 647.8,490 647.8,491.2 L647.8,495 C648.6,494.4 649.6,494.8 649.8,495.6 C650.6,495.2 651.4,495.6 651.6,496.4 C652.6,496.2 653,497 653,498 C653,500.4 652,502.4 649.6,502.4 C647,502.4 645.6,501.4 644.4,499 C643.8,497.8 645,496.6 646,497.8 Z"/><circle cx="648.6" cy="499.2" r="1.1"/></g><path d="M669.3,491 L669.3,495 M669.3,497.2 L669.3,501.2 M664.2,496.1 L668.2,496.1 M670.4,496.1 L674.4,496.1" stroke="#333" stroke-width="0.9"/><g fill="none" stroke="#333" stroke-width="0.8"><path d="M686.4,496.2 C688,494 692,494 693.6,496.2 C692,498.4 688,498.4 686.4,496.2 Z"/><circle cx="690" cy="496.2" r="1.2" fill="#333"/><path d="M693.4,496.2 L696.4,494 L696.4,498.4 Z"/></g><path d="M709.6,492 L716.2,492 L717.8,500.4 L711.6,500.4 Z" fill="none" stroke="#222" stroke-width="1"/><g fill="#f8f8f8" stroke="#c4c4c4" stroke-width="0.9"><rect x="730.4" y="490.8" width="7.6" height="7"/><rect x="732.8" y="493.6" width="7.8" height="7.4"/></g></svg>
<div style="left:585.80px;top:607.60px;width:30.00px;height:30.00px;background:#d2d2d2;border:0.8px solid #b4b4b4;"></div><div class="t" style="top:618px;font-size:8.2px;color:#333;white-space:pre;font-weight:bold;-webkit-text-stroke:0;left:400.80px;width:400px;text-align:center;">W</div>
<div style="left:622.80px;top:607.60px;width:20.00px;height:19.90px;background:#d2d2d2;border:0.8px solid #b4b4b4;"></div><div class="t" style="top:613px;font-size:8.2px;color:#333;white-space:pre;font-weight:bold;-webkit-text-stroke:0;left:432.80px;width:400px;text-align:center;">S</div>
<div style="left:642.60px;top:607.60px;width:10.20px;height:19.90px;background:#d2d2d2;border:0.8px solid #b4b4b4;"></div><div class="t" style="top:613px;font-size:8.2px;color:#333;white-space:pre;font-weight:bold;-webkit-text-stroke:0;left:447.70px;width:400px;text-align:center;">X</div>
<div style="left:622.80px;top:627.30px;width:30.00px;height:10.30px;background:#fff;border:0.8px solid #b4b4b4;"></div><div class="t" style="top:627px;font-size:8.2px;color:#333;white-space:pre;font-weight:bold;-webkit-text-stroke:0;left:437.80px;width:400px;text-align:center;">B</div>
<div style="left:659.60px;top:607.60px;width:10.20px;height:19.90px;background:#f2f2f2;border:0.8px solid #b4b4b4;"></div><div class="t" style="top:613px;font-size:8.2px;color:#333;white-space:pre;font-weight:bold;-webkit-text-stroke:0;left:464.70px;width:400px;text-align:center;">L</div>
<div style="left:669.60px;top:607.60px;width:10.30px;height:19.90px;background:#f2f2f2;border:0.8px solid #b4b4b4;"></div><div class="t" style="top:613px;font-size:8.2px;color:#333;white-space:pre;font-weight:bold;-webkit-text-stroke:0;left:474.75px;width:400px;text-align:center;">M</div>
<div style="left:679.70px;top:607.60px;width:10.30px;height:19.90px;background:#d2d2d2;border:0.8px solid #b4b4b4;"></div><div class="t" style="top:613px;font-size:8.2px;color:#333;white-space:pre;font-weight:bold;-webkit-text-stroke:0;left:484.85px;width:400px;text-align:center;">R</div>
<div style="left:659.60px;top:627.30px;width:30.40px;height:10.30px;background:#fff;border:0.8px solid #b4b4b4;"></div><div class="t" style="top:627px;font-size:8.2px;color:#333;white-space:pre;font-weight:bold;-webkit-text-stroke:0;left:474.80px;width:400px;text-align:center;">B</div>
<div style="left:696.60px;top:607.60px;width:10.20px;height:10.20px;background:#f2f2f2;border:0.8px solid #b4b4b4;"></div><div class="t" style="top:609px;font-size:8.0px;color:#333;white-space:pre;font-weight:bold;-webkit-text-stroke:0;left:501.70px;width:400px;text-align:center;">1</div>
<div style="left:706.60px;top:607.60px;width:10.20px;height:10.20px;background:#f2f2f2;border:0.8px solid #b4b4b4;"></div><div class="t" style="top:609px;font-size:8.0px;color:#333;white-space:pre;font-weight:bold;-webkit-text-stroke:0;left:511.70px;width:400px;text-align:center;">2</div>
<div style="left:716.60px;top:607.60px;width:10.20px;height:10.20px;background:#f2f2f2;border:0.8px solid #b4b4b4;"></div><div class="t" style="top:609px;font-size:8.0px;color:#333;white-space:pre;font-weight:bold;-webkit-text-stroke:0;left:521.70px;width:400px;text-align:center;">3</div>
<div style="left:696.60px;top:617.60px;width:10.20px;height:10.20px;background:#f2f2f2;border:0.8px solid #b4b4b4;"></div><div class="t" style="top:619px;font-size:8.0px;color:#333;white-space:pre;font-weight:bold;-webkit-text-stroke:0;left:501.70px;width:400px;text-align:center;">4</div>
<div style="left:706.60px;top:617.60px;width:10.20px;height:10.20px;background:#f2f2f2;border:0.8px solid #b4b4b4;"></div><div class="t" style="top:619px;font-size:8.0px;color:#333;white-space:pre;font-weight:bold;-webkit-text-stroke:0;left:511.70px;width:400px;text-align:center;">5</div>
<div style="left:716.60px;top:617.60px;width:10.20px;height:10.20px;background:#f2f2f2;border:0.8px solid #b4b4b4;"></div><div class="t" style="top:619px;font-size:8.0px;color:#333;white-space:pre;font-weight:bold;-webkit-text-stroke:0;left:521.70px;width:400px;text-align:center;">6</div>
<div style="left:696.60px;top:627.60px;width:10.20px;height:10.20px;background:#f2f2f2;border:0.8px solid #b4b4b4;"></div><div class="t" style="top:629px;font-size:8.0px;color:#333;white-space:pre;font-weight:bold;-webkit-text-stroke:0;left:501.70px;width:400px;text-align:center;">7</div>
<div style="left:706.60px;top:627.60px;width:10.20px;height:10.20px;background:#f2f2f2;border:0.8px solid #b4b4b4;"></div><div class="t" style="top:629px;font-size:8.0px;color:#333;white-space:pre;font-weight:bold;-webkit-text-stroke:0;left:511.70px;width:400px;text-align:center;">8</div>
<div style="left:716.60px;top:627.60px;width:10.20px;height:10.20px;background:#f2f2f2;border:0.8px solid #b4b4b4;"></div><div class="t" style="top:629px;font-size:8.0px;color:#333;white-space:pre;font-weight:bold;-webkit-text-stroke:0;left:521.70px;width:400px;text-align:center;">9</div>
<div style="left:733.40px;top:607.60px;width:20.30px;height:10.20px;background:#f2f2f2;border:0.8px solid #b4b4b4;"></div><div class="t" style="top:609px;font-size:8.0px;color:#333;white-space:pre;font-weight:bold;-webkit-text-stroke:0;left:543.55px;width:400px;text-align:center;">U</div>
<div style="left:753.50px;top:607.60px;width:10.00px;height:10.20px;background:#f2f2f2;border:0.8px solid #b4b4b4;"></div><div class="t" style="top:609px;font-size:8.0px;color:#333;white-space:pre;font-weight:bold;-webkit-text-stroke:0;left:558.50px;width:400px;text-align:center;">3</div>
<div style="left:733.40px;top:617.60px;width:20.30px;height:10.20px;background:#f2f2f2;border:0.8px solid #b4b4b4;"></div><div class="t" style="top:619px;font-size:8.0px;color:#333;white-space:pre;font-weight:bold;-webkit-text-stroke:0;left:543.55px;width:400px;text-align:center;">C</div>
<div style="left:753.50px;top:617.60px;width:10.00px;height:10.20px;background:#f2f2f2;border:0.8px solid #b4b4b4;"></div><div class="t" style="top:619px;font-size:8.0px;color:#333;white-space:pre;font-weight:bold;-webkit-text-stroke:0;left:558.50px;width:400px;text-align:center;">6</div>
<div style="left:733.40px;top:627.60px;width:20.30px;height:10.20px;background:#f2f2f2;border:0.8px solid #b4b4b4;"></div><div class="t" style="top:629px;font-size:8.0px;color:#333;white-space:pre;font-weight:bold;-webkit-text-stroke:0;left:543.55px;width:400px;text-align:center;">D</div>
<div style="left:753.50px;top:627.60px;width:10.00px;height:10.20px;background:#f2f2f2;border:0.8px solid #b4b4b4;"></div><div class="t" style="top:629px;font-size:8.0px;color:#333;white-space:pre;font-weight:bold;-webkit-text-stroke:0;left:558.50px;width:400px;text-align:center;">9</div>
<!-- window buttons -->
<div style="left:5.00px;top:3.80px;width:11.00px;height:11.00px;border-radius:50%;background:radial-gradient(circle at 50% 38%,#f9b822 0%,#e59a0a 55%,#b06e00 90%,#6a4400 100%);box-shadow:0 0 0 0.5px #3c2800;"></div><svg style="left:5.00px;top:3.80px" width="11.00" height="11.00" viewBox="-5 -5 10 10"><path d="M-2.9,-2.1 L2.9,-2.1 L0,3.1 Z" fill="#fff6dc"/></svg>
<div style="left:814.90px;top:4.10px;width:11.00px;height:11.00px;border-radius:50%;background:radial-gradient(circle at 50% 38%,#f9b822 0%,#e59a0a 55%,#b06e00 90%,#6a4400 100%);box-shadow:0 0 0 0.5px #3c2800;"></div><svg style="left:814.90px;top:4.10px" width="11.00" height="11.00" viewBox="-5 -5 10 10"><path d="M-1.8,-2 L0.2,-2 L0.2,0 L-1.8,0 Z M0,0 L2,0 L2,2.2 L0,2.2 Z" fill="#f0cc74"/></svg>
<div style="left:827.50px;top:4.10px;width:11.00px;height:11.00px;border-radius:50%;background:radial-gradient(circle at 50% 38%,#f9b822 0%,#e59a0a 55%,#b06e00 90%,#6a4400 100%);box-shadow:0 0 0 0.5px #3c2800;"></div><svg style="left:827.50px;top:4.10px" width="11.00" height="11.00" viewBox="-5 -5 10 10"><rect x="-2" y="-1.8" width="4" height="3.6" fill="none" stroke="#f0cc74" stroke-width="1.1"/></svg>
<div style="left:840.20px;top:4.10px;width:11.00px;height:11.00px;border-radius:50%;background:radial-gradient(circle at 50% 38%,#f9b822 0%,#e59a0a 55%,#b06e00 90%,#6a4400 100%);box-shadow:0 0 0 0.5px #3c2800;"></div><svg style="left:840.20px;top:4.10px" width="11.00" height="11.00" viewBox="-5 -5 10 10"><path d="M-2.2,-2.2 L2.2,2.2 M2.2,-2.2 L-2.2,2.2" stroke="#f2d080" stroke-width="1.5" fill="none"/></svg>
<div style="left:449.30px;top:128.70px;width:11.00px;height:11.00px;border-radius:50%;background:radial-gradient(circle at 50% 38%,#f9b822 0%,#e59a0a 55%,#b06e00 90%,#6a4400 100%);box-shadow:0 0 0 0.5px #3c2800;"></div><svg style="left:449.30px;top:128.70px" width="11.00" height="11.00" viewBox="-5 -5 10 10"><path d="M-1.8,-2 L0.2,-2 L0.2,0 L-1.8,0 Z M0,0 L2,0 L2,2.2 L0,2.2 Z" fill="#f0cc74"/></svg>
<div style="left:462.50px;top:128.70px;width:11.00px;height:11.00px;border-radius:50%;background:radial-gradient(circle at 50% 38%,#f9b822 0%,#e59a0a 55%,#b06e00 90%,#6a4400 100%);box-shadow:0 0 0 0.5px #3c2800;"></div><svg style="left:462.50px;top:128.70px" width="11.00" height="11.00" viewBox="-5 -5 10 10"><rect x="-2" y="-1.8" width="4" height="3.6" fill="none" stroke="#f0cc74" stroke-width="1.1"/></svg>
<div style="left:475.50px;top:128.70px;width:11.00px;height:11.00px;border-radius:50%;background:radial-gradient(circle at 50% 38%,#f9b822 0%,#e59a0a 55%,#b06e00 90%,#6a4400 100%);box-shadow:0 0 0 0.5px #3c2800;"></div><svg style="left:475.50px;top:128.70px" width="11.00" height="11.00" viewBox="-5 -5 10 10"><path d="M-2.2,-2.2 L2.2,2.2 M2.2,-2.2 L-2.2,2.2" stroke="#f2d080" stroke-width="1.5" fill="none"/></svg>
<div style="left:498.60px;top:128.50px;width:11.00px;height:11.00px;border-radius:50%;background:radial-gradient(circle at 50% 38%,#f9b822 0%,#e59a0a 55%,#b06e00 90%,#6a4400 100%);box-shadow:0 0 0 0.5px #3c2800;"></div><svg style="left:498.60px;top:128.50px" width="11.00" height="11.00" viewBox="-5 -5 10 10"><path d="M-2.9,-2.1 L2.9,-2.1 L0,3.1 Z" fill="#fff6dc"/></svg>
<div style="left:814.70px;top:128.80px;width:11.00px;height:11.00px;border-radius:50%;background:radial-gradient(circle at 50% 38%,#f9b822 0%,#e59a0a 55%,#b06e00 90%,#6a4400 100%);box-shadow:0 0 0 0.5px #3c2800;"></div><svg style="left:814.70px;top:128.80px" width="11.00" height="11.00" viewBox="-5 -5 10 10"><path d="M-1.8,-2 L0.2,-2 L0.2,0 L-1.8,0 Z M0,0 L2,0 L2,2.2 L0,2.2 Z" fill="#f0cc74"/></svg>
<div style="left:827.50px;top:128.80px;width:11.00px;height:11.00px;border-radius:50%;background:radial-gradient(circle at 50% 38%,#f9b822 0%,#e59a0a 55%,#b06e00 90%,#6a4400 100%);box-shadow:0 0 0 0.5px #3c2800;"></div><svg style="left:827.50px;top:128.80px" width="11.00" height="11.00" viewBox="-5 -5 10 10"><rect x="-2" y="-1.8" width="4" height="3.6" fill="none" stroke="#f0cc74" stroke-width="1.1"/></svg>
<div style="left:840.40px;top:128.80px;width:11.00px;height:11.00px;border-radius:50%;background:radial-gradient(circle at 50% 38%,#f9b822 0%,#e59a0a 55%,#b06e00 90%,#6a4400 100%);box-shadow:0 0 0 0.5px #3c2800;"></div><svg style="left:840.40px;top:128.80px" width="11.00" height="11.00" viewBox="-5 -5 10 10"><path d="M-2.2,-2.2 L2.2,2.2 M2.2,-2.2 L-2.2,2.2" stroke="#f2d080" stroke-width="1.5" fill="none"/></svg>
<div style="left:498.60px;top:443.70px;width:11.00px;height:11.00px;border-radius:50%;background:radial-gradient(circle at 50% 38%,#f9b822 0%,#e59a0a 55%,#b06e00 90%,#6a4400 100%);box-shadow:0 0 0 0.5px #3c2800;"></div><svg style="left:498.60px;top:443.70px" width="11.00" height="11.00" viewBox="-5 -5 10 10"><path d="M-2.9,-2.1 L2.9,-2.1 L0,3.1 Z" fill="#fff6dc"/></svg>
<div style="left:814.70px;top:444.10px;width:11.00px;height:11.00px;border-radius:50%;background:radial-gradient(circle at 50% 38%,#f9b822 0%,#e59a0a 55%,#b06e00 90%,#6a4400 100%);box-shadow:0 0 0 0.5px #3c2800;"></div><svg style="left:814.70px;top:444.10px" width="11.00" height="11.00" viewBox="-5 -5 10 10"><path d="M-1.8,-2 L0.2,-2 L0.2,0 L-1.8,0 Z M0,0 L2,0 L2,2.2 L0,2.2 Z" fill="#f0cc74"/></svg>
<div style="left:827.50px;top:444.10px;width:11.00px;height:11.00px;border-radius:50%;background:radial-gradient(circle at 50% 38%,#f9b822 0%,#e59a0a 55%,#b06e00 90%,#6a4400 100%);box-shadow:0 0 0 0.5px #3c2800;"></div><svg style="left:827.50px;top:444.10px" width="11.00" height="11.00" viewBox="-5 -5 10 10"><rect x="-2" y="-1.8" width="4" height="3.6" fill="none" stroke="#f0cc74" stroke-width="1.1"/></svg>
<div style="left:840.40px;top:444.10px;width:11.00px;height:11.00px;border-radius:50%;background:radial-gradient(circle at 50% 38%,#f9b822 0%,#e59a0a 55%,#b06e00 90%,#6a4400 100%);box-shadow:0 0 0 0.5px #3c2800;"></div><svg style="left:840.40px;top:444.10px" width="11.00" height="11.00" viewBox="-5 -5 10 10"><path d="M-2.2,-2.2 L2.2,2.2 M2.2,-2.2 L-2.2,2.2" stroke="#f2d080" stroke-width="1.5" fill="none"/></svg>
<!-- file menu popup -->
<div style="left:3.00px;top:28.80px;width:142.60px;height:151.20px;background:#eeeeee;border:1px solid #91a6d0;border-top:none;"></div>
<div style="left:2.10px;top:29.00px;width:143.90px;height:14.60px;background:#a3b8d2;border:2.1px solid #0fe60f;"></div>
<div class="t" style="top:32px;font-size:8.42px;color:#333;white-space:pre;font-weight:bold;-webkit-text-stroke:0;left:7.70px;">Read Event Locally</div>
<div class="t" style="top:45px;font-size:8.3px;color:#333;white-space:pre;font-weight:bold;-webkit-text-stroke:0;left:7.70px;">Read Event From URL (live)</div>
<div class="t" style="top:60px;font-size:8.62px;color:#333;white-space:pre;font-weight:bold;-webkit-text-stroke:0;left:7.70px;">Clear Hypatia Project</div>
<div class="t" style="top:73px;font-size:8.6px;color:#333;white-space:pre;font-weight:bold;-webkit-text-stroke:0;left:7.70px;">Load Hypatia Project</div>
<div class="t" style="top:85px;font-size:8.6px;color:#333;white-space:pre;font-weight:bold;-webkit-text-stroke:0;left:7.70px;">Save Hypatia Project</div>
<div class="t" style="top:99px;font-size:8.42px;color:#333;white-space:pre;font-weight:bold;-webkit-text-stroke:0;left:7.70px;">Loop over events</div>
<div class="t" style="top:114px;font-size:8.5px;color:#333;white-space:pre;font-weight:bold;-webkit-text-stroke:0;left:7.70px;">Save Image of Canvas</div>
<div class="t" style="top:125px;font-size:8.42px;color:#333;white-space:pre;font-weight:bold;-webkit-text-stroke:0;left:7.70px;">Animated Event</div>
<div class="t" style="top:141px;font-size:8.64px;color:#333;white-space:pre;font-weight:bold;-webkit-text-stroke:0;left:7.70px;">Event Properties</div>
<div class="t" style="top:153px;font-size:8.42px;color:#333;white-space:pre;font-weight:bold;-webkit-text-stroke:0;left:7.70px;">Read Geometry</div>
<div class="t" style="top:168px;font-size:8.42px;color:#333;white-space:pre;font-weight:bold;-webkit-text-stroke:0;left:7.70px;">Exit</div>
<div style="left:4.00px;top:55.80px;width:140.80px;height:1.20px;background:#a3b5da;"></div>
<div style="left:4.00px;top:95.90px;width:140.80px;height:1.20px;background:#a3b5da;"></div>
<div style="left:4.00px;top:109.50px;width:140.80px;height:1.20px;background:#a3b5da;"></div>
<div style="left:4.00px;top:136.30px;width:140.80px;height:1.20px;background:#a3b5da;"></div>
<div style="left:4.00px;top:150.40px;width:140.80px;height:1.20px;background:#a3b5da;"></div>
<div style="left:4.00px;top:164.70px;width:140.80px;height:1.20px;background:#a3b5da;"></div>
</div>
</body></html>
